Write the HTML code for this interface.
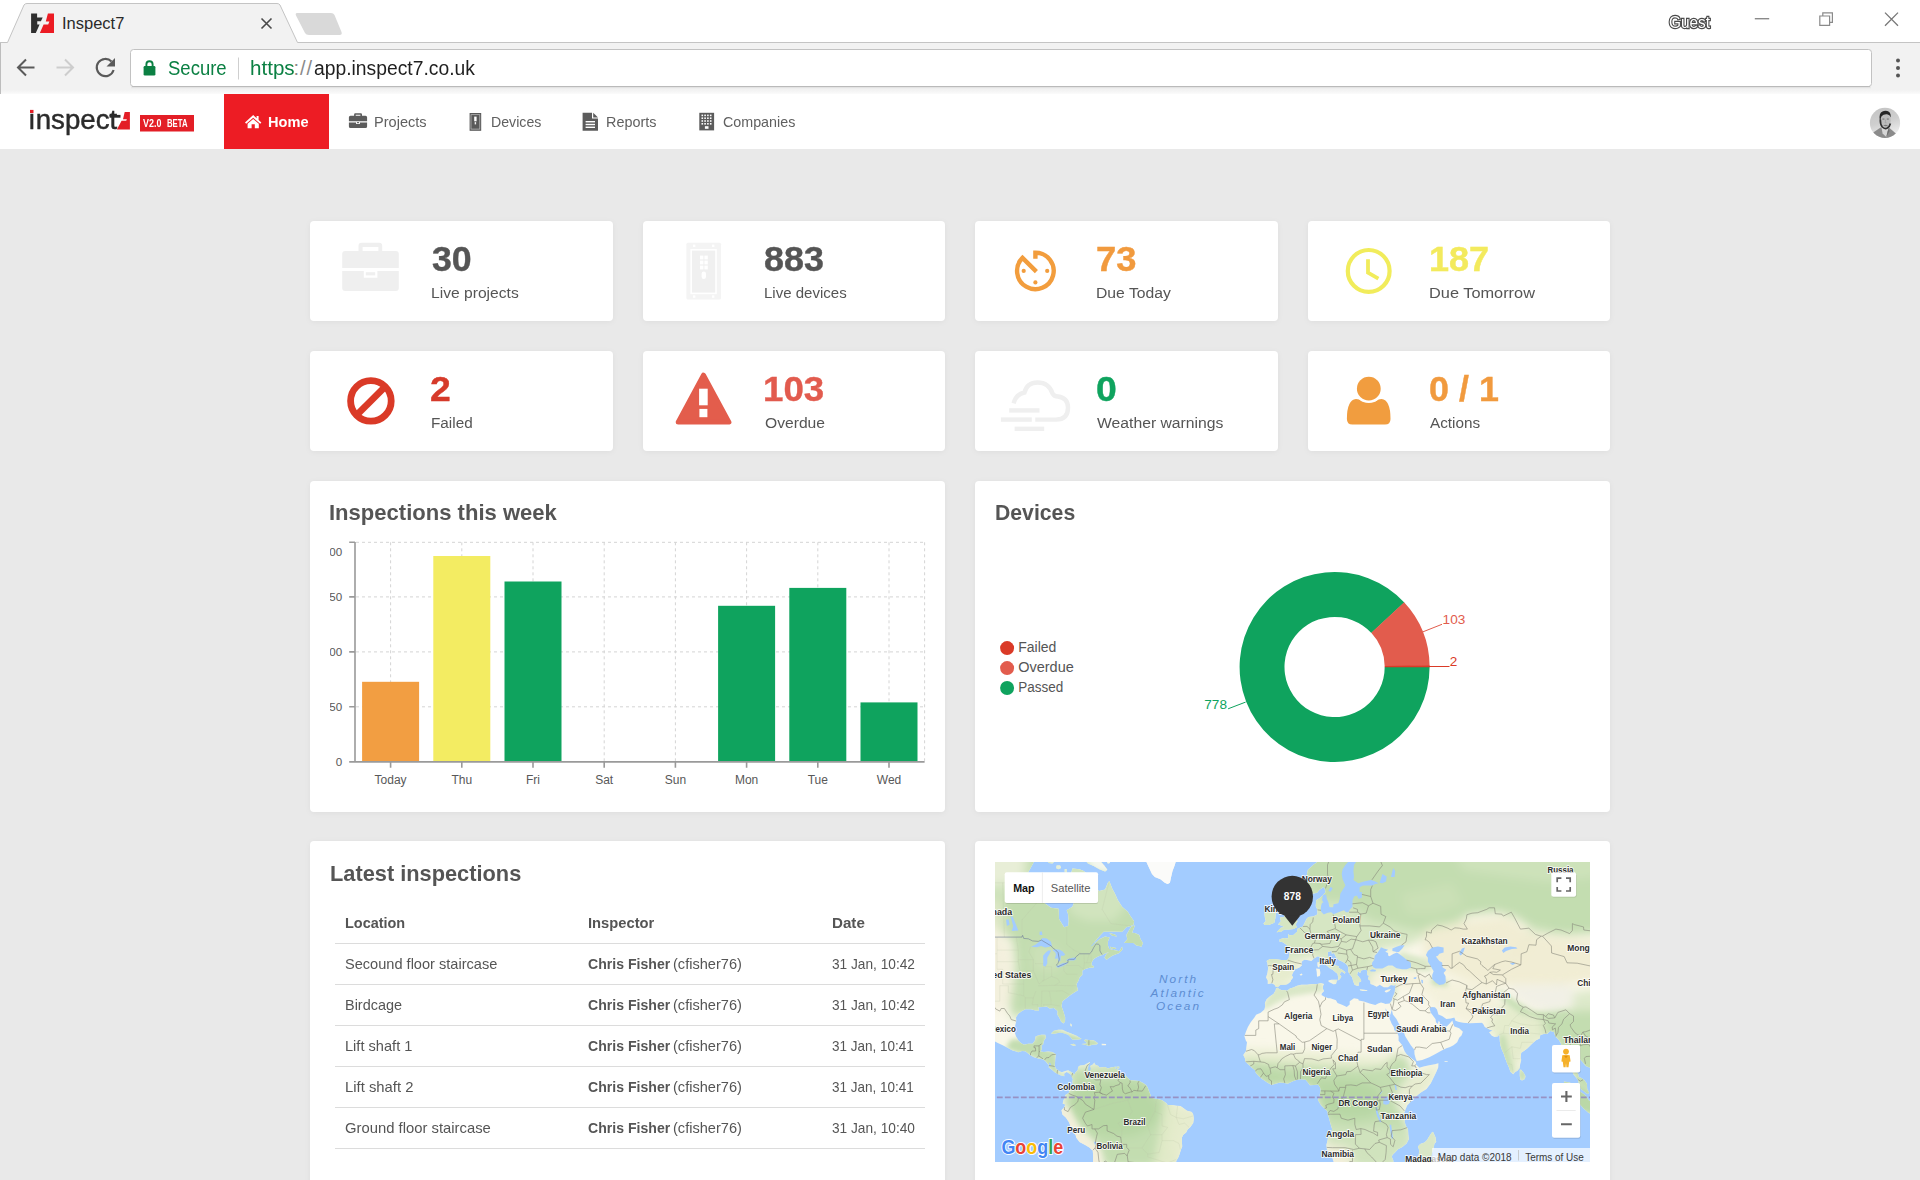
<!DOCTYPE html>
<html>
<head>
<meta charset="utf-8">
<title>Inspect7</title>
<style>
*{box-sizing:border-box;margin:0;padding:0}
html,body{width:1920px;height:1180px;overflow:hidden;background:#e9e9e9;font-family:"Liberation Sans",sans-serif;color:#555}
.abs{position:absolute}
.t{position:absolute;white-space:nowrap;line-height:1;transform-origin:0 0}
#chrome{position:absolute;left:0;top:0;width:1920px;height:94px;background:#fff}
#nav{position:absolute;left:0;top:94px;width:1920px;height:55px;background:#fff}
#home{position:absolute;left:224px;top:0;width:105px;height:55px;background:#ed1c24}
.card{position:absolute;width:302.5px;height:100px;background:#fff;border-radius:4px;box-shadow:0 1px 6px rgba(0,0,0,.05)}
.panel{position:absolute;width:635px;background:#fff;border-radius:4px;box-shadow:0 1px 6px rgba(0,0,0,.05)}
.num{position:absolute;left:121px;top:19.6px;font-weight:bold;font-size:35px;-webkit-text-stroke:.4px;transform:scaleX(.97);line-height:1;white-space:nowrap;transform-origin:0 0}
.lbl{position:absolute;left:121px;top:64px;font-size:15.4px;line-height:1;white-space:nowrap;color:#555;transform-origin:0 0}
.h2{position:absolute;left:20px;top:21px;font-weight:bold;font-size:22px;line-height:1;color:#555;white-space:nowrap;transform-origin:0 0}
.navt{position:absolute;top:21px;font-size:14.5px;line-height:1;color:#606060;white-space:nowrap;transform-origin:0 0}
</style>
</head>
<body>
<!-- BROWSER CHROME -->
<div id="chrome">
<svg class="abs" style="left:0;top:0" width="1920" height="94" viewBox="0 0 1920 94">
  <rect x="0" y="42" width="1920" height="52" fill="#f2f2f2"/>
  <path d="M0 42.5 L7.5 42.5 L24 5 Q25 3.5 27 3.5 L277 3.5 Q279 3.5 280 5 L297.5 42.5 L1920 42.5" fill="#f2f2f2" stroke="none"/>
  <path d="M0 42.5 L7.5 42.5 L24 5 Q25 3.5 27 3.5 L277 3.5 Q279 3.5 280 5 L297.5 42.5 L1920 42.5" fill="none" stroke="#c4c4c4" stroke-width="1"/>
  <rect x="0" y="43" width="1" height="51" fill="#bdbdbd"/>
  <!-- new tab button -->
  <path d="M297 13 L331 13 Q333.5 13 334.5 15 L341.5 32 Q342.5 35 339.5 35 L309 35 Q306 35 305 33 L296 15.5 Q295 13 297 13Z" fill="#d9d9d9"/>
  <!-- url box -->
  <rect x="130.5" y="49.5" width="1741" height="37" rx="3" fill="#fff" stroke="#c2c2c2"/>
  <rect x="132" y="86.2" width="1738" height="1.1" fill="#b9b9b9"/><rect x="131" y="87.3" width="1740" height="1" fill="#e4e4e4"/><defs><linearGradient id="tbg" x1="0" y1="0" x2="0" y2="1"><stop offset="0" stop-color="#f2f2f2"/><stop offset="1" stop-color="#fbfbfb"/></linearGradient></defs><rect x="1" y="90" width="1919" height="4" fill="url(#tbg)"/>
  <!-- favicon -->
  <path d="M31.1 13.6 L37.1 13.6 L37.1 17.5 L42.7 17.5 L40.9 21.3 L37.25 21.3 L37.25 24.4 L39.6 24.4 L35.8 32.9 L31.1 32.9Z" fill="#2f2f2f"/>
  <path d="M47.9 13.6 L54 13.6 L54 32.9 L39.85 32.9 L43.6 24.5 L48.2 24.5 L49.4 21.4 L45.8 21.4Z" fill="#ec1c24"/>
  <!-- tab close -->
  <path d="M261.5 18.5 L271.5 28.5 M271.5 18.5 L261.5 28.5" stroke="#4a4a4a" stroke-width="1.6" fill="none"/>
  <!-- back -->
  <path d="M34.5 67.5 L18.5 67.5 M26 59.5 L18 67.5 L26 75.5" stroke="#5a5a5a" stroke-width="2" fill="none"/>
  <!-- forward -->
  <path d="M56.5 67.5 L72.5 67.5 M65 59.5 L73 67.5 L65 75.5" stroke="#cdcdcd" stroke-width="2" fill="none"/>
  <!-- reload -->
  <path d="M111.5 61.5 A8.6 8.6 0 1 0 113.6 70" stroke="#5a5a5a" stroke-width="2.1" fill="none"/>
  <path d="M115 58 L115 66.5 L106.5 66.5Z" fill="#5a5a5a"/>
  <!-- lock -->
  <path d="M146.4 66 L146.4 64.3 A3.1 3.1 0 0 1 152.6 64.3 L152.6 66" stroke="#0b8043" stroke-width="1.9" fill="none"/>
  <rect x="143.6" y="66" width="11.8" height="9.6" rx="1.3" fill="#0b8043"/>
  <rect x="238" y="57.5" width="1" height="22" fill="#cfcfcf"/>
  <!-- menu dots -->
  <circle cx="1898" cy="60.5" r="2" fill="#555"/><circle cx="1898" cy="68" r="2" fill="#555"/><circle cx="1898" cy="75.5" r="2" fill="#555"/>
  <!-- window controls -->
  <rect x="1754.8" y="18" width="14.4" height="1.4" fill="#8a8a8a"/>
  <path d="M1819.8 16 L1819.8 25.3 L1829.6 25.3 L1829.6 16Z M1822.8 16 L1822.8 12.8 L1832.4 12.8 L1832.4 22.3 L1829.6 22.3" stroke="#8a8a8a" stroke-width="1.2" fill="none"/>
  <path d="M1885 12.6 L1898 25.8 M1898 12.6 L1885 25.8" stroke="#777" stroke-width="1.3" fill="none"/>
</svg>
<div class="t" id="tabtitle" style="left:62px;top:15px;font-size:16.5px;color:#2a2a2a">Inspect7</div>
<div class="t" id="secure" style="left:167.5px;top:58.2px;font-size:20px;color:#0b8043;transform:scaleX(.925)">Secure</div>
<div class="t" id="url1" style="left:249.5px;top:58.2px;font-size:20px;color:#0b8043;transform:scaleX(1.03)">https</div>
<div class="t" id="url2" style="left:293.5px;top:58.2px;font-size:20px;color:#8a8a8a;letter-spacing:1px">://</div>
<div class="t" id="url3" style="left:314px;top:58.2px;font-size:20px;color:#1f1f1f;transform:scaleX(.965)">app.inspect7.co.uk</div>
<div class="t" id="guest" style="left:1669.4px;top:13.6px;font-size:16.3px;color:#fff;-webkit-text-stroke:2.4px #4a4a4a;paint-order:stroke fill;transform:scaleX(.945)">Guest</div>
</div>

<!-- APP NAV -->
<div id="nav">
  <div id="home"></div>
  <!-- logo -->
  <div class="t" id="logo" style="left:28px;top:12.5px;font-size:27px;color:#2b2b2b;-webkit-text-stroke:.45px #2b2b2b;transform:scaleX(1.025)">&#305;nspect</div>
  <svg class="abs" style="left:0;top:0" width="1920" height="55" viewBox="0 94 1920 55">
    <rect x="30" y="109.9" width="3.5" height="3.1" fill="#e31e26"/>
    <rect x="109.5" y="114.9" width="11" height="2.8" fill="#2b2b2b"/>
    <!-- red 7 box -->
    <path d="M124.7 112 L129.9 112 L129.9 129.5 L116.9 129.5 L121.6 120.8 L126.2 120.8 L126.9 119.3 L123 119.3Z" fill="#e31e26"/>
    <!-- badge -->
    <rect x="140" y="115" width="54" height="16.5" fill="#e31e26"/>
    <!-- home icon -->
    <g transform="translate(245,114.5)" fill="#fff">
      <path d="M8.2 0.6 L0 8 L1.2 9.3 L8.2 3.2 L15.2 9.3 L16.4 8 L13.6 5.4 L13.6 1.6 L11.6 1.6 L11.6 3.7Z"/>
      <path d="M8.2 4.5 L2.6 9.3 L2.6 13.8 L6.6 13.8 L6.6 9.8 L9.8 9.8 L9.8 13.8 L13.8 13.8 L13.8 9.3Z"/>
    </g>
    <!-- projects icon (briefcase) -->
    <g transform="translate(348.9,112.8)" fill="#5c5c5c">
      <path d="M5.2 2.9 L5.2 1.6 Q5.2 .4 6.4 .4 L11.9 .4 Q13.1 .4 13.1 1.6 L13.1 2.9 L16.6 2.9 Q18.2 2.9 18.2 4.5 L18.2 8.4 L0 8.4 L0 4.5 Q0 2.9 1.6 2.9Z M6.8 2.9 L11.5 2.9 L11.5 1.9 L6.8 1.9Z"/>
      <path d="M0 9.7 L7.2 9.7 L7.2 11.2 L11 11.2 L11 9.7 L18.2 9.7 L18.2 13.7 Q18.2 15.3 16.6 15.3 L1.6 15.3 Q0 15.3 0 13.7Z"/>
      <rect x="8.1" y="9.3" width="2" height="1.1"/>
    </g>
    <!-- devices icon -->
    <g transform="translate(469.6,113)">
      <rect x="0" y="0" width="11.6" height="17.8" fill="#595959"/>
      <rect x="1.4" y="1.7" width="8.8" height="14.4" fill="none" stroke="#c4c4c4" stroke-width=".7"/>
      <rect x="4.6" y="3.6" width="2.4" height="4.7" fill="#fff"/>
      <rect x="5.1" y="9.1" width="1.4" height="2.3" fill="#f0f0f0"/>
    </g>
    <!-- reports icon -->
    <g transform="translate(582.6,112.8)">
      <path d="M0 0 L9.4 0 L9.4 5.8 L15.4 5.8 L15.4 18 L0 18Z" fill="#5c5c5c"/>
      <path d="M10.6 0 L15.4 4.7 L10.6 4.7Z" fill="#5c5c5c"/>
      <rect x="3" y="8.2" width="9.4" height="1.4" fill="#fff"/><rect x="3" y="11" width="9.4" height="1.4" fill="#fff"/><rect x="3" y="13.8" width="9.4" height="1.4" fill="#fff"/>
    </g>
    <!-- companies icon -->
    <g transform="translate(699.3,112.8)">
      <rect x="0" y="0" width="14.8" height="17.6" fill="#5c5c5c"/>
      <g fill="#fff">
      <rect x="2.2" y="1.8" width="1.6" height="1.6"/><rect x="5" y="1.8" width="1.6" height="1.6"/><rect x="7.8" y="1.8" width="1.6" height="1.6"/><rect x="10.6" y="1.8" width="1.6" height="1.6"/>
      <rect x="2.2" y="4.6" width="1.6" height="1.6"/><rect x="5" y="4.6" width="1.6" height="1.6"/><rect x="7.8" y="4.6" width="1.6" height="1.6"/><rect x="10.6" y="4.6" width="1.6" height="1.6"/>
      <rect x="2.2" y="7.4" width="1.6" height="1.6"/><rect x="5" y="7.4" width="1.6" height="1.6"/><rect x="7.8" y="7.4" width="1.6" height="1.6"/><rect x="10.6" y="7.4" width="1.6" height="1.6"/>
      <rect x="2.2" y="10.2" width="1.6" height="1.6"/><rect x="5" y="10.2" width="1.6" height="1.6"/><rect x="7.8" y="10.2" width="1.6" height="1.6"/><rect x="10.6" y="10.2" width="1.6" height="1.6"/>
      <rect x="5.6" y="13.4" width="3.6" height="2.6"/>
      </g>
    </g>
    <!-- avatar -->
    <defs><clipPath id="avc"><circle cx="1885" cy="122.9" r="15.1"/></clipPath>
    <linearGradient id="avg" x1="0" y1="0" x2="0.3" y2="1"><stop offset="0" stop-color="#c2c2c2"/><stop offset=".55" stop-color="#cfcfcf"/><stop offset="1" stop-color="#efefef"/></linearGradient></defs>
    <g clip-path="url(#avc)">
      <rect x="1869" y="107" width="32" height="32" fill="url(#avg)"/>
      <path d="M1872.5 133 L1880.6 127.4 L1889.2 127.8 L1895.6 133.2 L1897 140 L1872 140Z" fill="#8b8b8b"/>
      <path d="M1881.3 126.5 L1888.6 127 L1887.6 131.5 L1886.3 137 L1882.6 133.5Z" fill="#d6d6d6"/>
      <path d="M1886.3 137 L1887.6 131.5 L1888.8 128.5 L1889.6 131 Z" fill="#6e6e6e"/>
      <ellipse cx="1885.4" cy="120.6" rx="5.3" ry="7.2" fill="#bcbcbc"/>
      <path d="M1879.7 119.5 Q1878.8 113 1882.5 111.4 Q1886 109.8 1889.3 112 Q1891.3 114 1890.9 117.5 Q1889.8 114.6 1887 114.3 Q1883.5 114 1881.6 116.2 Q1880.6 117.5 1880.6 120.5Z" fill="#262626"/>
      <path d="M1880.3 119.5 Q1880.2 124.5 1882.3 127 Q1884.8 129.4 1887.3 128 Q1889.8 126.5 1890.4 123.5" fill="none" stroke="#303030" stroke-width="1.7"/>
      <path d="M1883.2 125.2 Q1885.5 124.2 1888 125.2 Q1886 127.2 1883.2 125.2Z" fill="#777"/>
      <rect x="1882.4" y="118.6" width="2" height=".9" fill="#666"/><rect x="1886.8" y="118.6" width="2" height=".9" fill="#666"/>
      <path d="M1885.6 119.5 L1885.2 122.8 L1886.4 122.8" stroke="#999" stroke-width=".6" fill="none"/>
    </g>
  </svg>
  <div class="t" id="badge1" style="left:142.6px;top:24px;font-size:10.5px;font-weight:bold;color:#fff;transform:scaleX(.85)">V2.0</div>
  <div class="t" id="badge2" style="left:166.6px;top:24px;font-size:10.5px;font-weight:bold;color:#fff;transform:scaleX(.74)">BETA</div>
  <div class="navt" id="nhome" style="left:268.2px;color:#fff;font-weight:bold;font-size:15.3px;top:20px;transform:scaleX(0.953)">Home</div>
  <div class="navt" id="nproj" style="left:373.60px;transform:scaleX(1.0042)">Projects</div>
  <div class="navt" id="ndev" style="left:491.40px;transform:scaleX(0.9759)">Devices</div>
  <div class="navt" id="nrep" style="left:605.80px;transform:scaleX(0.9918)">Reports</div>
  <div class="navt" id="ncomp" style="left:723.40px;transform:scaleX(0.9856)">Companies</div>
</div>

<!-- CARDS -->
<div class="card" style="left:310px;top:221px"><div class="num" id="num1" style="left:121.90px;transform:scaleX(1.0194)">30</div><div class="lbl" id="lbl1" style="left:120.90px;transform:scaleX(1.0152)">Live projects</div></div>
<div class="card" style="left:642.5px;top:221px"><div class="num" id="num2" style="left:121.20px;transform:scaleX(1.0257)">883</div><div class="lbl" id="lbl2" style="left:121.00px;transform:scaleX(0.9766)">Live devices</div></div>
<div class="card" style="left:975px;top:221px"><div class="num" id="num3" style="left:120.60px;color:#f19a3e;transform:scaleX(1.0393)">73</div><div class="lbl" id="lbl3" style="left:120.50px;transform:scaleX(1.0210)">Due Today</div></div>
<div class="card" style="left:1307.5px;top:221px"><div class="num" id="num4" style="left:121.10px;color:#f3ea5d;transform:scaleX(1.0305)">187</div><div class="lbl" id="lbl4" style="left:121.20px;transform:scaleX(1.0616)">Due Tomorrow</div></div>
<div class="card" style="left:310px;top:351px"><div class="num" id="num5" style="left:120.10px;color:#d63a2a;transform:scaleX(1.0677)">2</div><div class="lbl" id="lbl5" style="left:120.90px;transform:scaleX(0.9942)">Failed</div></div>
<div class="card" style="left:642.5px;top:351px"><div class="num" id="num6" style="left:120.60px;color:#e25b4e;transform:scaleX(1.0469)">103</div><div class="lbl" id="lbl6" style="left:122.60px;transform:scaleX(1.0164)">Overdue</div></div>
<div class="card" style="left:975px;top:351px"><div class="num" id="num7" style="left:120.60px;color:#0fa35e;transform:scaleX(1.0665)">0</div><div class="lbl" id="lbl7" style="left:121.50px;transform:scaleX(1.0215)">Weather warnings</div></div>
<div class="card" style="left:1307.5px;top:351px"><div class="num" id="num8" style="left:121.20px;color:#f19a3e;transform:scaleX(1.0258)">0 / 1</div><div class="lbl" id="lbl8" style="left:122.20px;transform:scaleX(0.9938)">Actions</div></div>


<!-- CARD ICONS -->
<svg class="abs" style="left:0;top:200px" width="1920" height="270" viewBox="0 200 1920 270">
  <!-- briefcase -->
  <g fill="#efefef">
    <path d="M358.5 252 L358.5 245.7 Q358.5 242.7 361.5 242.7 L379.2 242.7 Q382.2 242.7 382.2 245.7 L382.2 252 L378.4 252 L378.4 246.9 L362.6 246.9 L362.6 252Z"/>
    <path d="M345.2 251 L395.8 251 Q398.8 251 398.8 254 L398.8 267.9 L342.2 267.9 L342.2 254 Q342.2 251 345.2 251Z"/>
    <path d="M342.2 270.9 L363.8 270.9 L363.8 277.7 L377.4 277.7 L377.4 270.9 L398.8 270.9 L398.8 288 Q398.8 291 395.8 291 L345.2 291 Q342.2 291 342.2 288Z"/>
    <rect x="365.8" y="272.2" width="9.4" height="3.2"/>
  </g>
  <!-- device -->
  <g>
    <rect x="686.4" y="242.7" width="34.6" height="56.9" rx="1.5" fill="#f4f4f4"/>
    <rect x="690.4" y="249" width="26.4" height="45.2" fill="#fff"/>
    <rect x="692" y="250.6" width="23.2" height="42" fill="#f0f0f0"/>
    <g fill="#fff">
      <rect x="700" y="255.6" width="3.4" height="3.8"/><rect x="704.4" y="255.6" width="3.4" height="3.8"/>
      <rect x="700" y="260.6" width="3.4" height="3.8"/><rect x="704.4" y="260.6" width="3.4" height="3.8"/>
      <rect x="700" y="265.6" width="3.4" height="3.8"/><rect x="704.4" y="265.6" width="3.4" height="3.8"/>
      <rect x="701.6" y="271.6" width="4.4" height="7.4" rx="2.2"/>
      <rect x="693" y="244.6" width="2.4" height="2.4"/><rect x="712" y="244.6" width="2.4" height="2.4"/>
      <rect x="693" y="295.4" width="2.4" height="2.4"/><rect x="712" y="295.4" width="2.4" height="2.4"/>
    </g>
  </g>
  <!-- due today dial -->
  <g fill="none" stroke="#f29d3d" stroke-width="4.4">
    <path d="M1035.4 258.7 L1035.4 252.6 A18.3 18.3 0 1 1 1022.5 257.9 L1036.4 271.6" stroke-linejoin="miter" stroke-miterlimit="6"/>
  </g>
  <g fill="#f29d3d"><circle cx="1023.7" cy="270.9" r="2.1"/><circle cx="1047.2" cy="270.9" r="2.1"/><circle cx="1035.4" cy="282.4" r="2.1"/></g>
  <!-- clock -->
  <g fill="none" stroke="#f1ec5b">
    <circle cx="1368.7" cy="270.9" r="20.9" stroke-width="4.2"/>
    <path d="M1368 259.3 L1368 272.6 L1378.4 278.7" stroke-width="3.8" stroke-linejoin="miter"/>
  </g>
  <!-- ban -->
  <g fill="none" stroke="#da3a27" stroke-width="6.8">
    <circle cx="370.9" cy="400.9" r="20.3"/>
    <path d="M356.6 415.2 L385.2 386.6"/>
  </g>
  <!-- warning -->
  <path d="M703.5 375.2 L728.9 422.1 L678.2 422.1Z" fill="#e35d4c" stroke="#e35d4c" stroke-width="5" stroke-linejoin="round"/>
  <rect x="699.1" y="388.7" width="8.6" height="16.6" fill="#fff"/>
  <rect x="699.4" y="408.9" width="8" height="8.3" fill="#fff"/>
  <!-- weather -->
  <g fill="none" stroke="#efefef" stroke-width="4.4">
    <path d="M1013.6 403.4 Q1016 394 1024.5 392.5 Q1027 382.5 1037.5 382.5 Q1049 382.5 1052.5 393.5 Q1054 396.5 1058 396.5 Q1068 398 1068 407.5 Q1068 419.6 1056 419.6 L1035.3 419.6"/>
    <path d="M1009.2 410.4 L1039.5 410.4"/>
    <path d="M1000.9 419.6 L1031.8 419.6"/>
    <path d="M1014.6 428.8 L1044.2 428.8"/>
  </g>
  <!-- person -->
  <path d="M1352.4 424.6 Q1346.9 424.6 1346.9 419 Q1346.9 400 1356 399.1 Q1359 399.1 1362 401.5 L1375.6 401.5 Q1378.6 399.1 1381.5 399.1 Q1390.5 400 1390.5 419 Q1390.5 424.6 1385 424.6Z" fill="#f19d3f"/>
  <circle cx="1368.8" cy="388.7" r="14.3" fill="#fff"/>
  <circle cx="1368.8" cy="388.7" r="11.9" fill="#f19d3f"/>
</svg>

<!-- PANELS -->
<div class="panel" id="p1" style="left:310px;top:481px;height:331px"><div class="h2" id="h21" style="left:19.25px;transform:scaleX(1.0018)">Inspections this week</div>
<svg class="abs" style="left:0;top:0" width="635" height="330" viewBox="310 481 635 330" font-family="Liberation Sans, sans-serif">
<defs><clipPath id="ycl"><rect x="330" y="535" width="30" height="240"/></clipPath></defs>
<path d="M356.0 542.3 L924.6 542.3 M356.0 596.9 L924.6 596.9 M356.0 651.9 L924.6 651.9 M356.0 706.8 L924.6 706.8 M390.6 542.3 L390.6 760.9 M461.8 542.3 L461.8 760.9 M533.0 542.3 L533.0 760.9 M604.2 542.3 L604.2 760.9 M675.4 542.3 L675.4 760.9 M746.6 542.3 L746.6 760.9 M817.8 542.3 L817.8 760.9 M889.0 542.3 L889.0 760.9 M924.6 542.3 L924.6 760.9" stroke="#d4d4d4" stroke-width="1" stroke-dasharray="3 3" fill="none"/>
<rect x="362.1" y="681.8" width="57" height="79.5" fill="#f29e42"/>
<rect x="433.3" y="556" width="57" height="205.3" fill="#f3ec62"/>
<rect x="504.5" y="581.5" width="57" height="179.8" fill="#0fa35e"/>
<rect x="718.1" y="605.8" width="57" height="155.5" fill="#0fa35e"/>
<rect x="789.3" y="587.9" width="57" height="173.4" fill="#0fa35e"/>
<rect x="860.5" y="702.4" width="57" height="58.9" fill="#0fa35e"/>
<path d="M355.0 541.9 L355.0 762.7 M349.2 761.9 L924.6 761.9 M349.2 542.3 L355.0 542.3 M349.2 596.9 L355.0 596.9 M349.2 651.9 L355.0 651.9 M349.2 706.8 L355.0 706.8 M390.6 761.9 L390.6 767.7 M461.8 761.9 L461.8 767.7 M533.0 761.9 L533.0 767.7 M604.2 761.9 L604.2 767.7 M675.4 761.9 L675.4 767.7 M746.6 761.9 L746.6 767.7 M817.8 761.9 L817.8 767.7 M889.0 761.9 L889.0 767.7" stroke="#9a9a9a" stroke-width="1.6" fill="none"/>
<g clip-path="url(#ycl)" font-size="11.6" fill="#585858" text-anchor="end">
<text x="342.2" y="766">0</text>
<text x="342.2" y="710.9">50</text>
<text x="342.2" y="656">100</text>
<text x="342.2" y="601">150</text>
<text x="342.2" y="555.9">200</text>
</g>
<g font-size="12" fill="#585858" text-anchor="middle">
<text x="390.6" y="783.8">Today</text>
<text x="461.8" y="783.8">Thu</text>
<text x="533.0" y="783.8">Fri</text>
<text x="604.2" y="783.8">Sat</text>
<text x="675.4" y="783.8">Sun</text>
<text x="746.6" y="783.8">Mon</text>
<text x="817.8" y="783.8">Tue</text>
<text x="889.0" y="783.8">Wed</text>
</g></svg>
</div>
<div class="panel" id="p2" style="left:975px;top:481px;height:331px"><div class="h2" id="h22" style="left:19.75px;transform:scaleX(0.9643)">Devices</div>
<svg class="abs" style="left:0;top:0" width="635" height="330" viewBox="975 481 635 330" font-family="Liberation Sans, sans-serif">
<path d="M1404.29 602.44 A95.0 95.0 0 1 0 1429.60 667.00 L1384.70 667.00 A50.1 50.1 0 1 1 1371.35 632.95Z" fill="#0fa35e"/>
<path d="M1429.59 665.65 A95.0 95.0 0 0 0 1404.13 602.26 L1371.27 632.86 A50.1 50.1 0 0 1 1384.69 666.29Z" fill="#e25c4d"/>
<path d="M1429.60 667.25 A95.0 95.0 0 0 0 1429.59 665.32 L1384.69 666.11 A50.1 50.1 0 0 1 1384.70 667.13Z" fill="#da3a27"/>
<path d="M1423 631.8 L1442 624.3" stroke="#e25c4d" stroke-width="1" fill="none"/>
<path d="M1385 666.5 L1449.5 666.5" stroke="#da3a27" stroke-width="1.2" fill="none"/>
<path d="M1228.1 708.8 L1245.6 702.1" stroke="#0fa35e" stroke-width="1" fill="none"/>
<text x="1442.6" y="624" font-size="13.6" fill="#e25c4d">103</text>
<text x="1449.7" y="665.8" font-size="13.6" fill="#da3a27">2</text>
<text x="1204.3" y="708.8" font-size="13.6" fill="#0fa35e">778</text>
<circle cx="1007.1" cy="648.1" r="7" fill="#da3a27"/><circle cx="1007.1" cy="668.1" r="7" fill="#e25c4d"/><circle cx="1007.1" cy="688" r="7" fill="#0fa35e"/>
<g font-size="14" fill="#555"><text x="1018.2" y="651.8">Failed</text><text x="1018.2" y="671.8" textLength="55.6" lengthAdjust="spacingAndGlyphs">Overdue</text><text x="1018.2" y="691.7" textLength="45" lengthAdjust="spacingAndGlyphs">Passed</text></g>
</svg>
</div>
<div class="panel" id="p3" style="left:310px;top:841px;height:361px"><div class="abs" style="left:0;top:1px;width:635px;height:360px"><div class="h2" id="h23" style="left:20.00px;transform:scaleX(0.9903)">Latest inspections</div>
<style>.tc{position:absolute;white-space:nowrap;line-height:1;font-size:14.6px;color:#555;transform-origin:0 0}.tl{position:absolute;left:25px;width:590px;height:1px;background:#dcdcdc}</style>
<div class="tc" id="th1" style="left:35px;top:74.4px;font-weight:bold;transform:scaleX(0.9899)">Location</div>
<div class="tc" id="th2" style="left:277.8px;top:74.4px;font-weight:bold;transform:scaleX(1.0093)">Inspector</div>
<div class="tc" id="th3" style="left:522.2px;top:74.4px;font-weight:bold;transform:scaleX(1.0366)">Date</div>
<div class="tl" style="top:100.9px"></div>
<div class="tl" style="top:141.9px"></div>
<div class="tl" style="top:182.8px"></div>
<div class="tl" style="top:223.8px"></div>
<div class="tl" style="top:264.7px"></div>
<div class="tl" style="top:305.7px"></div>
<div class="tc" id="r0a" style="left:35px;top:115.1px;transform:scaleX(0.9986)">Secound floor staircase</div>
<div class="tc" id="r0b" style="left:277.8px;top:115.1px;font-weight:bold;transform:scaleX(0.9653)">Chris Fisher</div>
<div class="tc" id="r0c" style="left:363.3px;top:115.1px;transform:scaleX(0.9995)">(cfisher76)</div>
<div class="tc" id="r0d" style="left:522.2px;top:115.1px;transform:scaleX(0.9372)">31 Jan, 10:42</div>
<div class="tc" id="r1a" style="left:35px;top:156.1px;transform:scaleX(0.9894)">Birdcage</div>
<div class="tc" id="r1b" style="left:277.8px;top:156.1px;font-weight:bold;transform:scaleX(0.9653)">Chris Fisher</div>
<div class="tc" id="r1c" style="left:363.3px;top:156.1px;transform:scaleX(0.9995)">(cfisher76)</div>
<div class="tc" id="r1d" style="left:522.2px;top:156.1px;transform:scaleX(0.9372)">31 Jan, 10:42</div>
<div class="tc" id="r2a" style="left:35px;top:197.1px;transform:scaleX(1.0008)">Lift shaft 1</div>
<div class="tc" id="r2b" style="left:277.8px;top:197.1px;font-weight:bold;transform:scaleX(0.9653)">Chris Fisher</div>
<div class="tc" id="r2c" style="left:363.3px;top:197.1px;transform:scaleX(0.9995)">(cfisher76)</div>
<div class="tc" id="r2d" style="left:522.2px;top:197.1px;transform:scaleX(0.9248)">31 Jan, 10:41</div>
<div class="tc" id="r3a" style="left:35px;top:238.1px;transform:scaleX(1.0157)">Lift shaft 2</div>
<div class="tc" id="r3b" style="left:277.8px;top:238.1px;font-weight:bold;transform:scaleX(0.9653)">Chris Fisher</div>
<div class="tc" id="r3c" style="left:363.3px;top:238.1px;transform:scaleX(0.9995)">(cfisher76)</div>
<div class="tc" id="r3d" style="left:522.2px;top:238.1px;transform:scaleX(0.9248)">31 Jan, 10:41</div>
<div class="tc" id="r4a" style="left:35px;top:279.1px;transform:scaleX(1.0155)">Ground floor staircase</div>
<div class="tc" id="r4b" style="left:277.8px;top:279.1px;font-weight:bold;transform:scaleX(0.9653)">Chris Fisher</div>
<div class="tc" id="r4c" style="left:363.3px;top:279.1px;transform:scaleX(0.9995)">(cfisher76)</div>
<div class="tc" id="r4d" style="left:522.2px;top:279.1px;transform:scaleX(0.9372)">31 Jan, 10:40</div>
</div></div>
<div class="panel" id="p4" style="left:975px;top:841px;height:361px"><div class="abs" style="left:0;top:1px;width:635px;height:360px">
<svg class="abs" style="left:20px;top:20px" width="595" height="300" viewBox="995 862 595 300" font-family="Liberation Sans, sans-serif">
<rect x="995" y="862" width="595" height="300" fill="#a3ccff"/>
<defs><clipPath id="landclip"><path d="M994.1 858.5L1034.0 858.5L1034.0 861.7L1029.7 869.8L1025.4 877.0L1023.1 882.8L1024.9 889.5L1029.7 898.1L1036.8 899.1L1042.5 901.7L1051.0 907.8L1058.7 908.8L1059.0 919.0L1062.4 924.6L1064.1 927.3L1068.1 925.9L1068.7 921.3L1068.1 914.2L1066.7 910.3L1072.4 906.8L1074.6 900.7L1073.8 894.9L1069.5 889.5L1071.5 882.8L1070.9 874.0L1072.4 868.6L1079.5 869.2L1083.7 871.0L1089.4 875.8L1093.7 877.0L1094.8 882.8L1095.1 888.4L1099.4 891.1L1105.1 889.5L1107.9 882.8L1109.3 881.1L1112.2 888.4L1115.0 893.8L1117.9 900.2L1122.1 906.8L1127.8 911.8L1130.7 916.6L1134.1 921.3L1133.5 925.0L1126.4 927.3L1122.1 931.8L1113.6 931.4L1103.6 931.8L1099.4 936.2L1094.3 942.2L1095.1 943.1L1099.4 939.2L1105.1 936.6L1109.6 937.5L1107.9 941.4L1107.9 945.6L1109.3 948.9L1112.2 949.7L1116.4 950.5L1119.3 951.3L1122.1 946.4L1122.4 949.7L1119.3 953.0L1112.2 955.8L1106.5 959.7L1104.5 957.7L1106.5 953.8L1109.3 951.7L1105.1 953.4L1102.2 955.0L1098.0 956.6L1093.7 958.9L1091.7 962.4L1091.7 965.5L1093.7 965.9L1093.7 967.4L1089.4 967.8L1085.2 968.9L1082.3 970.8L1082.3 974.9L1079.5 977.5L1078.6 980.4L1076.6 984.0L1077.2 987.5L1078.0 990.3L1074.3 992.4L1070.9 994.8L1066.7 997.9L1062.4 1001.2L1061.5 1006.2L1063.8 1012.8L1065.2 1017.6L1065.0 1021.7L1063.3 1023.6L1061.0 1021.4L1059.6 1018.2L1057.3 1014.4L1057.6 1011.1L1053.9 1007.9L1049.6 1008.5L1046.8 1006.6L1042.5 1006.9L1038.2 1007.2L1039.1 1010.5L1035.4 1010.5L1031.1 1009.2L1025.4 1009.2L1022.0 1011.1L1018.3 1013.7L1016.0 1017.6L1016.3 1020.8L1014.9 1027.0L1014.6 1031.7L1016.0 1036.3L1018.6 1040.8L1021.2 1043.2L1024.0 1044.7L1028.3 1043.8L1032.5 1043.8L1034.8 1040.8L1035.7 1036.3L1041.1 1034.8L1045.3 1034.8L1045.9 1037.8L1043.9 1040.8L1043.1 1044.4L1041.6 1045.3L1041.6 1049.8L1040.2 1051.6L1043.9 1051.9L1048.2 1051.6L1052.4 1051.9L1055.9 1054.2L1055.3 1058.6L1055.0 1063.0L1054.7 1065.9L1056.1 1068.8L1059.0 1071.1L1061.8 1072.3L1065.2 1071.1L1068.1 1070.3L1070.9 1071.7L1072.6 1072.8L1072.1 1075.7L1069.5 1073.7L1066.7 1072.0L1064.1 1073.7L1064.4 1076.3L1061.0 1075.4L1057.3 1073.7L1055.0 1072.6L1051.6 1069.4L1048.7 1067.4L1049.0 1065.3L1045.3 1061.0L1043.3 1059.5L1038.2 1058.6L1034.0 1057.2L1029.7 1054.8L1025.4 1051.3L1022.0 1051.0L1018.3 1052.2L1012.6 1050.4L1008.4 1048.3L1002.7 1045.3L997.8 1042.9L991.3 1039.9L991.3 858.5ZM1124.1 943.1L1127.3 939.2L1126.4 934.9L1129.5 929.6L1131.2 926.4L1134.9 925.5L1133.5 929.1L1132.1 932.7L1134.9 933.1L1139.2 934.9L1140.6 939.2L1142.9 943.1L1141.5 946.8L1139.2 946.0L1136.4 945.6L1133.5 943.1L1129.2 943.1ZM1110.2 946.8L1113.6 947.6L1116.4 948.1L1115.0 949.3L1110.8 948.5ZM1109.3 933.1L1115.0 934.4L1117.0 936.6L1112.2 935.8ZM1083.7 858.5L1088.0 863.6L1093.7 866.1L1099.4 869.2L1105.1 871.6L1107.3 869.8L1104.2 865.5L1100.8 861.7L1099.4 858.5ZM1105.1 858.5L1107.9 863.6L1109.9 863.0L1110.8 858.5ZM1046.8 858.5L1048.7 863.0L1052.4 863.6L1056.1 859.8L1059.6 858.5ZM1056.7 865.5L1060.1 865.5L1061.0 868.0L1058.1 869.2L1056.1 868.0ZM1064.7 869.2L1066.7 869.2L1066.7 872.8L1064.7 872.2ZM1144.9 858.5L1146.3 861.7L1149.2 868.0L1152.0 874.0L1154.8 877.0L1160.5 879.3L1164.8 882.8L1167.6 883.9L1169.9 882.8L1171.1 877.0L1172.5 871.0L1174.8 864.9L1176.7 858.5ZM1276.6 932.2L1281.4 931.4L1284.3 929.6L1288.5 929.6L1293.4 929.1L1296.8 927.3L1295.6 924.6L1297.6 920.9L1293.7 919.0L1292.8 916.1L1291.9 911.8L1288.5 909.3L1287.1 904.8L1284.3 904.3L1287.1 899.1L1287.7 896.0L1282.8 895.4L1281.4 893.8L1284.0 890.6L1278.6 890.6L1277.2 894.9L1275.7 898.1L1276.9 902.7L1278.0 906.8L1279.1 909.8L1282.8 909.8L1284.3 914.2L1284.3 917.1L1280.0 917.5L1280.9 921.3L1278.0 924.6L1281.4 925.5L1284.3 926.9L1280.9 927.8ZM1264.4 925.0L1268.6 925.0L1274.3 922.7L1275.4 918.0L1275.7 913.2L1277.2 911.3L1275.2 908.3L1271.5 907.8L1268.6 911.3L1264.4 913.2L1264.9 917.5L1265.8 920.9L1263.5 923.2ZM1319.8 858.5L1594.3 858.5L1594.3 1067.7L1590.0 1067.7L1585.8 1065.9L1582.9 1062.4L1579.8 1058.9L1577.2 1059.2L1577.0 1063.0L1575.0 1067.4L1575.3 1071.1L1578.1 1073.7L1578.7 1076.9L1581.5 1078.0L1584.4 1080.3L1586.9 1083.7L1587.2 1088.9L1589.2 1093.1L1587.2 1093.7L1583.8 1091.1L1580.9 1088.9L1579.0 1084.6L1578.1 1080.3L1576.4 1078.0L1573.5 1074.6L1572.4 1071.7L1573.3 1067.4L1573.3 1063.0L1572.1 1057.8L1570.7 1054.2L1570.4 1049.8L1568.1 1048.6L1564.2 1051.9L1561.0 1051.3L1561.6 1046.8L1560.7 1042.9L1558.8 1039.9L1555.3 1036.3L1553.9 1032.0L1550.2 1031.1L1547.4 1033.8L1543.7 1034.1L1540.3 1035.1L1539.7 1038.4L1536.0 1040.2L1532.3 1043.5L1527.5 1048.3L1524.6 1050.4L1521.2 1052.8L1520.6 1057.2L1521.2 1060.1L1520.1 1064.5L1519.8 1067.9L1517.5 1070.8L1515.2 1072.0L1513.2 1074.3L1510.4 1071.7L1509.0 1067.4L1507.0 1063.0L1505.3 1058.6L1503.9 1054.2L1501.9 1049.8L1500.4 1045.3L1499.9 1041.7L1499.6 1036.3L1499.0 1034.1L1498.2 1036.3L1494.8 1036.9L1491.9 1035.7L1489.1 1032.3L1492.8 1030.5L1490.5 1030.1L1487.6 1028.6L1484.8 1027.0L1483.4 1024.2L1482.0 1022.7L1476.3 1023.0L1469.2 1023.3L1463.5 1022.7L1459.2 1022.0L1455.5 1020.8L1454.4 1017.6L1450.7 1018.5L1446.4 1018.9L1442.1 1016.0L1438.4 1014.4L1437.0 1009.5L1435.0 1007.2L1431.6 1006.9L1429.6 1008.5L1430.8 1012.8L1433.6 1016.6L1435.6 1019.2L1435.9 1022.3L1437.9 1023.9L1438.7 1020.8L1439.9 1022.3L1439.3 1025.8L1442.1 1026.4L1446.4 1026.7L1449.2 1023.9L1452.4 1020.5L1453.2 1023.9L1454.4 1026.4L1459.2 1028.3L1462.9 1031.7L1461.5 1035.4L1459.2 1037.8L1457.2 1042.3L1453.5 1045.3L1450.1 1047.1L1446.4 1048.3L1441.3 1050.7L1435.0 1054.2L1429.3 1057.2L1422.2 1060.1L1416.8 1061.0L1415.7 1058.6L1414.5 1054.2L1414.3 1049.8L1410.8 1045.3L1408.0 1040.8L1405.2 1036.3L1403.7 1031.7L1400.9 1027.0L1398.6 1023.3L1396.6 1019.2L1392.9 1014.4L1391.8 1009.5L1390.6 1013.7L1390.1 1015.0L1388.1 1012.8L1385.5 1008.2L1384.7 1003.9L1389.5 1003.6L1391.8 1000.6L1392.6 997.2L1394.6 992.7L1395.2 988.2L1395.8 985.0L1393.8 985.4L1390.9 985.0L1388.1 987.2L1383.8 987.2L1379.8 984.7L1376.7 986.8L1373.3 985.0L1370.5 984.0L1370.2 980.7L1367.9 978.9L1369.0 975.7L1367.0 974.9L1367.3 971.9L1366.8 970.1L1363.9 969.7L1361.1 970.5L1360.2 973.1L1357.9 971.6L1357.1 974.9L1358.8 976.8L1361.1 979.7L1361.1 981.5L1358.8 982.5L1358.8 985.7L1356.8 985.7L1354.5 984.7L1353.1 981.1L1352.5 978.6L1351.7 976.8L1349.7 974.2L1348.0 971.2L1348.3 967.4L1347.4 965.5L1345.4 963.6L1342.6 961.7L1338.3 959.7L1336.0 957.0L1334.0 953.0L1331.8 953.8L1331.5 950.9L1327.8 952.1L1328.1 956.6L1331.2 959.3L1333.2 963.6L1336.0 965.5L1338.9 966.3L1338.3 967.8L1342.6 970.1L1345.4 972.3L1344.9 973.8L1341.7 971.6L1339.7 974.2L1341.4 976.8L1339.7 979.3L1337.5 980.7L1338.3 978.2L1337.5 973.8L1335.5 972.3L1333.5 970.5L1329.8 968.2L1327.5 966.3L1324.1 963.6L1322.4 959.7L1320.7 957.4L1317.8 956.2L1314.1 958.5L1311.3 960.9L1307.0 960.1L1304.2 959.7L1301.6 961.7L1301.9 965.5L1299.1 967.8L1295.1 969.3L1292.8 973.1L1291.9 975.3L1293.1 977.5L1290.8 980.4L1290.5 981.8L1287.7 984.0L1285.7 984.7L1280.3 985.0L1277.7 987.2L1275.7 986.8L1274.6 984.7L1271.8 983.3L1267.8 984.0L1267.8 980.4L1266.1 977.5L1267.5 973.1L1268.1 968.6L1267.5 963.6L1266.6 960.9L1270.0 958.9L1275.7 959.3L1281.4 960.1L1287.1 960.1L1288.8 957.7L1289.4 951.7L1289.4 948.9L1286.5 944.7L1282.8 942.2L1279.4 941.4L1279.7 939.2L1284.3 937.9L1288.2 938.4L1288.0 934.0L1289.4 935.3L1293.4 934.9L1297.1 931.8L1297.6 928.7L1299.9 927.8L1302.8 926.4L1304.7 922.7L1306.5 919.0L1308.4 917.1L1312.7 916.6L1315.6 915.6L1317.5 914.2L1317.3 909.3L1315.8 906.3L1316.1 900.2L1319.8 898.1L1322.7 895.4L1325.5 892.2L1324.7 888.4L1323.2 886.7L1321.8 888.4L1319.8 889.5L1317.0 892.7L1312.7 893.8L1309.0 890.6L1307.6 885.6L1307.0 879.9L1307.0 874.0L1307.9 869.8L1311.3 866.7L1314.1 864.2L1317.0 862.3ZM1519.8 1069.7L1521.2 1069.7L1523.8 1073.1L1525.5 1076.0L1524.9 1078.9L1522.1 1080.6L1520.4 1079.7L1519.8 1076.0ZM1563.9 1081.4L1570.1 1082.6L1573.0 1086.6L1577.2 1090.3L1580.1 1091.7L1584.4 1094.6L1587.2 1097.4L1588.6 1100.2L1594.3 1103.1L1594.3 1114.5L1588.6 1113.1L1583.8 1108.8L1580.1 1104.5L1578.1 1100.2L1574.4 1096.0L1573.0 1092.6L1570.1 1090.3L1567.3 1086.9L1564.2 1083.7ZM1433.0 1131.8L1435.6 1137.6L1436.2 1142.0L1434.5 1143.5L1433.6 1148.0L1432.2 1152.5L1430.8 1158.5L1429.3 1164.7L1416.0 1164.7L1416.0 1161.6L1416.5 1158.5L1418.5 1155.5L1419.4 1151.0L1418.0 1146.5L1420.2 1144.1L1424.5 1142.6L1427.1 1140.0L1429.3 1136.2L1431.6 1132.7ZM1276.0 988.2L1277.7 987.9L1281.4 990.3L1284.6 990.0L1287.1 990.7L1290.0 988.6L1293.4 987.5L1297.1 985.7L1301.3 984.7L1307.0 984.7L1312.7 984.0L1317.5 984.0L1320.7 982.9L1324.1 984.0L1323.0 986.1L1323.0 988.9L1324.1 991.0L1321.8 993.4L1321.5 995.1L1324.4 996.8L1328.4 998.2L1330.3 998.2L1336.0 1000.2L1337.5 1002.9L1342.6 1004.9L1346.8 1006.9L1349.7 1004.6L1349.7 1001.2L1354.0 998.2L1358.2 998.9L1358.8 1000.6L1363.9 1001.6L1369.6 1003.6L1375.3 1004.9L1378.1 1003.6L1381.0 1002.6L1384.7 1003.6L1385.5 1008.2L1385.8 1011.1L1388.1 1015.0L1389.5 1018.5L1391.8 1023.9L1393.8 1027.0L1394.3 1030.1L1397.5 1033.2L1398.6 1036.3L1398.6 1040.8L1402.3 1045.3L1404.6 1051.3L1406.6 1054.2L1410.0 1057.2L1413.7 1060.1L1416.0 1061.9L1416.0 1064.5L1419.4 1067.7L1423.6 1066.5L1429.3 1065.3L1435.0 1064.2L1438.4 1063.3L1438.2 1067.4L1436.4 1071.7L1433.6 1077.4L1430.8 1083.2L1426.5 1088.9L1420.8 1092.6L1416.5 1096.0L1412.3 1100.2L1409.4 1103.1L1407.1 1105.4L1405.2 1110.2L1403.7 1114.5L1405.2 1117.4L1404.6 1121.7L1406.0 1126.0L1408.0 1128.9L1408.3 1134.7L1408.9 1139.1L1406.6 1143.5L1402.3 1147.1L1398.0 1149.2L1395.2 1152.2L1392.4 1154.9L1391.8 1157.0L1393.2 1160.0L1393.8 1164.7L1333.8 1164.7L1333.8 1161.9L1332.6 1158.5L1330.6 1154.0L1326.9 1149.5L1326.4 1145.0L1327.5 1140.6L1328.4 1136.2L1331.2 1133.2L1332.1 1128.9L1330.3 1123.1L1329.2 1118.8L1327.8 1114.5L1327.5 1111.6L1326.4 1110.2L1324.1 1108.2L1321.2 1105.4L1319.3 1102.5L1317.8 1099.7L1319.8 1096.8L1319.8 1094.6L1320.7 1090.3L1320.1 1087.4L1318.1 1084.6L1314.1 1084.9L1309.9 1085.2L1307.9 1082.6L1305.6 1079.7L1301.3 1079.2L1297.1 1079.7L1292.8 1081.2L1287.7 1083.7L1284.3 1082.9L1280.0 1082.6L1275.7 1083.7L1271.5 1084.9L1267.2 1082.6L1262.1 1078.9L1258.7 1076.0L1255.8 1073.1L1255.0 1070.3L1251.6 1067.4L1250.1 1065.9L1247.3 1063.6L1245.3 1061.6L1245.0 1058.6L1243.3 1055.1L1245.9 1051.3L1246.4 1046.8L1247.0 1042.3L1245.9 1040.8L1244.4 1036.3L1245.9 1031.7L1247.9 1027.0L1250.7 1022.3L1254.4 1017.6L1256.1 1014.7L1260.7 1012.8L1264.4 1009.5L1265.2 1006.2L1264.9 1002.9L1266.6 999.2L1270.0 996.2L1273.5 994.1L1275.7 990.3ZM1072.6 1072.8L1074.3 1074.6L1075.8 1072.0L1077.8 1070.0L1078.0 1067.1L1080.0 1065.6L1084.3 1065.0L1087.4 1063.3L1090.0 1061.9L1090.0 1063.6L1088.3 1065.3L1089.1 1067.4L1090.8 1065.6L1092.8 1064.5L1094.3 1062.4L1095.1 1064.5L1098.5 1065.9L1099.4 1067.4L1105.1 1067.1L1107.9 1068.5L1110.8 1067.4L1115.0 1066.8L1116.7 1066.8L1114.7 1068.2L1119.3 1070.3L1119.9 1073.1L1122.7 1073.7L1126.4 1076.6L1130.1 1080.3L1134.1 1080.6L1139.2 1080.9L1143.5 1083.2L1146.3 1085.2L1147.7 1087.4L1149.2 1091.7L1150.6 1095.1L1150.6 1097.4L1154.8 1098.8L1157.7 1099.1L1162.0 1100.2L1166.2 1103.1L1167.6 1105.1L1171.9 1105.1L1176.2 1105.7L1180.4 1105.9L1183.3 1107.9L1187.0 1110.8L1191.8 1111.9L1193.2 1114.5L1193.8 1118.8L1193.2 1123.1L1190.4 1126.9L1187.6 1129.5L1186.1 1132.4L1183.3 1134.7L1181.9 1137.6L1181.9 1142.0L1182.2 1146.5L1181.0 1149.5L1179.6 1154.0L1178.5 1157.0L1176.2 1161.0L1176.2 1164.7L1093.1 1164.7L1093.1 1155.5L1092.8 1150.7L1089.4 1147.4L1085.2 1145.0L1079.5 1142.0L1076.1 1137.6L1075.8 1135.6L1073.2 1131.8L1070.9 1126.9L1068.7 1121.7L1065.8 1117.4L1062.4 1114.5L1061.5 1110.2L1064.4 1107.1L1065.2 1104.5L1062.7 1103.7L1063.3 1100.2L1065.0 1097.4L1065.2 1095.1L1068.7 1093.1L1069.5 1090.3L1072.4 1087.4L1072.9 1084.6L1072.4 1081.7L1072.9 1078.9L1071.5 1076.6ZM1051.0 1033.5L1053.9 1030.8L1058.1 1029.8L1062.4 1029.8L1066.7 1031.7L1072.4 1034.1L1076.6 1035.7L1080.9 1038.4L1081.7 1039.0L1078.0 1039.6L1072.4 1039.6L1070.9 1037.5L1068.1 1034.8L1063.8 1033.2L1060.1 1032.6L1056.7 1033.2L1053.9 1033.8ZM1081.2 1044.1L1085.2 1044.7L1088.9 1045.9L1092.3 1044.7L1096.5 1044.4L1098.2 1043.5L1096.0 1041.7L1093.7 1040.2L1088.9 1039.9L1085.2 1039.6L1084.0 1040.5L1086.3 1042.3L1086.9 1043.5ZM1070.1 1044.4L1073.8 1043.8L1076.1 1045.3L1073.8 1045.9ZM1101.7 1043.8L1106.2 1044.1L1105.9 1045.3L1101.7 1045.3ZM1116.7 1066.8L1119.3 1066.5L1119.3 1068.5L1116.7 1068.5ZM1070.1 1023.6L1071.5 1023.9L1072.1 1026.4L1070.4 1026.1ZM1324.7 908.3L1328.4 907.8L1328.4 904.3L1325.5 904.8ZM1321.0 908.8L1323.5 908.8L1323.2 906.3L1321.2 906.8ZM1344.6 899.1L1346.6 897.0L1346.8 894.4L1344.9 896.5ZM1328.4 980.4L1331.2 979.7L1337.2 979.7L1336.0 984.0L1333.5 984.3L1328.6 981.8ZM1316.1 968.6L1319.8 968.9L1320.4 973.1L1319.8 976.0L1317.0 976.8L1316.7 971.9ZM1317.3 962.4L1319.5 961.7L1319.8 965.5L1319.0 967.8L1317.5 966.3ZM1359.9 989.3L1362.5 989.6L1367.6 990.3L1366.8 991.0L1362.5 991.0L1359.9 990.3ZM1384.7 991.0L1386.7 990.0L1390.9 988.9L1389.5 991.0L1386.7 992.4L1385.0 992.0ZM1299.6 974.5L1301.9 973.4L1302.5 974.5L1301.0 975.7ZM1444.4 1061.3L1447.8 1061.3L1447.5 1062.1L1444.7 1062.1Z"/></clipPath><filter id="blur6" x="-20%" y="-20%" width="140%" height="140%"><feGaussianBlur stdDeviation="5"/></filter><filter id="blur3" x="-20%" y="-20%" width="140%" height="140%"><feGaussianBlur stdDeviation="2.5"/></filter></defs>
<path d="M994.1 858.5L1034.0 858.5L1034.0 861.7L1029.7 869.8L1025.4 877.0L1023.1 882.8L1024.9 889.5L1029.7 898.1L1036.8 899.1L1042.5 901.7L1051.0 907.8L1058.7 908.8L1059.0 919.0L1062.4 924.6L1064.1 927.3L1068.1 925.9L1068.7 921.3L1068.1 914.2L1066.7 910.3L1072.4 906.8L1074.6 900.7L1073.8 894.9L1069.5 889.5L1071.5 882.8L1070.9 874.0L1072.4 868.6L1079.5 869.2L1083.7 871.0L1089.4 875.8L1093.7 877.0L1094.8 882.8L1095.1 888.4L1099.4 891.1L1105.1 889.5L1107.9 882.8L1109.3 881.1L1112.2 888.4L1115.0 893.8L1117.9 900.2L1122.1 906.8L1127.8 911.8L1130.7 916.6L1134.1 921.3L1133.5 925.0L1126.4 927.3L1122.1 931.8L1113.6 931.4L1103.6 931.8L1099.4 936.2L1094.3 942.2L1095.1 943.1L1099.4 939.2L1105.1 936.6L1109.6 937.5L1107.9 941.4L1107.9 945.6L1109.3 948.9L1112.2 949.7L1116.4 950.5L1119.3 951.3L1122.1 946.4L1122.4 949.7L1119.3 953.0L1112.2 955.8L1106.5 959.7L1104.5 957.7L1106.5 953.8L1109.3 951.7L1105.1 953.4L1102.2 955.0L1098.0 956.6L1093.7 958.9L1091.7 962.4L1091.7 965.5L1093.7 965.9L1093.7 967.4L1089.4 967.8L1085.2 968.9L1082.3 970.8L1082.3 974.9L1079.5 977.5L1078.6 980.4L1076.6 984.0L1077.2 987.5L1078.0 990.3L1074.3 992.4L1070.9 994.8L1066.7 997.9L1062.4 1001.2L1061.5 1006.2L1063.8 1012.8L1065.2 1017.6L1065.0 1021.7L1063.3 1023.6L1061.0 1021.4L1059.6 1018.2L1057.3 1014.4L1057.6 1011.1L1053.9 1007.9L1049.6 1008.5L1046.8 1006.6L1042.5 1006.9L1038.2 1007.2L1039.1 1010.5L1035.4 1010.5L1031.1 1009.2L1025.4 1009.2L1022.0 1011.1L1018.3 1013.7L1016.0 1017.6L1016.3 1020.8L1014.9 1027.0L1014.6 1031.7L1016.0 1036.3L1018.6 1040.8L1021.2 1043.2L1024.0 1044.7L1028.3 1043.8L1032.5 1043.8L1034.8 1040.8L1035.7 1036.3L1041.1 1034.8L1045.3 1034.8L1045.9 1037.8L1043.9 1040.8L1043.1 1044.4L1041.6 1045.3L1041.6 1049.8L1040.2 1051.6L1043.9 1051.9L1048.2 1051.6L1052.4 1051.9L1055.9 1054.2L1055.3 1058.6L1055.0 1063.0L1054.7 1065.9L1056.1 1068.8L1059.0 1071.1L1061.8 1072.3L1065.2 1071.1L1068.1 1070.3L1070.9 1071.7L1072.6 1072.8L1072.1 1075.7L1069.5 1073.7L1066.7 1072.0L1064.1 1073.7L1064.4 1076.3L1061.0 1075.4L1057.3 1073.7L1055.0 1072.6L1051.6 1069.4L1048.7 1067.4L1049.0 1065.3L1045.3 1061.0L1043.3 1059.5L1038.2 1058.6L1034.0 1057.2L1029.7 1054.8L1025.4 1051.3L1022.0 1051.0L1018.3 1052.2L1012.6 1050.4L1008.4 1048.3L1002.7 1045.3L997.8 1042.9L991.3 1039.9L991.3 858.5ZM1124.1 943.1L1127.3 939.2L1126.4 934.9L1129.5 929.6L1131.2 926.4L1134.9 925.5L1133.5 929.1L1132.1 932.7L1134.9 933.1L1139.2 934.9L1140.6 939.2L1142.9 943.1L1141.5 946.8L1139.2 946.0L1136.4 945.6L1133.5 943.1L1129.2 943.1ZM1110.2 946.8L1113.6 947.6L1116.4 948.1L1115.0 949.3L1110.8 948.5ZM1109.3 933.1L1115.0 934.4L1117.0 936.6L1112.2 935.8ZM1083.7 858.5L1088.0 863.6L1093.7 866.1L1099.4 869.2L1105.1 871.6L1107.3 869.8L1104.2 865.5L1100.8 861.7L1099.4 858.5ZM1105.1 858.5L1107.9 863.6L1109.9 863.0L1110.8 858.5ZM1046.8 858.5L1048.7 863.0L1052.4 863.6L1056.1 859.8L1059.6 858.5ZM1056.7 865.5L1060.1 865.5L1061.0 868.0L1058.1 869.2L1056.1 868.0ZM1064.7 869.2L1066.7 869.2L1066.7 872.8L1064.7 872.2ZM1144.9 858.5L1146.3 861.7L1149.2 868.0L1152.0 874.0L1154.8 877.0L1160.5 879.3L1164.8 882.8L1167.6 883.9L1169.9 882.8L1171.1 877.0L1172.5 871.0L1174.8 864.9L1176.7 858.5ZM1276.6 932.2L1281.4 931.4L1284.3 929.6L1288.5 929.6L1293.4 929.1L1296.8 927.3L1295.6 924.6L1297.6 920.9L1293.7 919.0L1292.8 916.1L1291.9 911.8L1288.5 909.3L1287.1 904.8L1284.3 904.3L1287.1 899.1L1287.7 896.0L1282.8 895.4L1281.4 893.8L1284.0 890.6L1278.6 890.6L1277.2 894.9L1275.7 898.1L1276.9 902.7L1278.0 906.8L1279.1 909.8L1282.8 909.8L1284.3 914.2L1284.3 917.1L1280.0 917.5L1280.9 921.3L1278.0 924.6L1281.4 925.5L1284.3 926.9L1280.9 927.8ZM1264.4 925.0L1268.6 925.0L1274.3 922.7L1275.4 918.0L1275.7 913.2L1277.2 911.3L1275.2 908.3L1271.5 907.8L1268.6 911.3L1264.4 913.2L1264.9 917.5L1265.8 920.9L1263.5 923.2ZM1319.8 858.5L1594.3 858.5L1594.3 1067.7L1590.0 1067.7L1585.8 1065.9L1582.9 1062.4L1579.8 1058.9L1577.2 1059.2L1577.0 1063.0L1575.0 1067.4L1575.3 1071.1L1578.1 1073.7L1578.7 1076.9L1581.5 1078.0L1584.4 1080.3L1586.9 1083.7L1587.2 1088.9L1589.2 1093.1L1587.2 1093.7L1583.8 1091.1L1580.9 1088.9L1579.0 1084.6L1578.1 1080.3L1576.4 1078.0L1573.5 1074.6L1572.4 1071.7L1573.3 1067.4L1573.3 1063.0L1572.1 1057.8L1570.7 1054.2L1570.4 1049.8L1568.1 1048.6L1564.2 1051.9L1561.0 1051.3L1561.6 1046.8L1560.7 1042.9L1558.8 1039.9L1555.3 1036.3L1553.9 1032.0L1550.2 1031.1L1547.4 1033.8L1543.7 1034.1L1540.3 1035.1L1539.7 1038.4L1536.0 1040.2L1532.3 1043.5L1527.5 1048.3L1524.6 1050.4L1521.2 1052.8L1520.6 1057.2L1521.2 1060.1L1520.1 1064.5L1519.8 1067.9L1517.5 1070.8L1515.2 1072.0L1513.2 1074.3L1510.4 1071.7L1509.0 1067.4L1507.0 1063.0L1505.3 1058.6L1503.9 1054.2L1501.9 1049.8L1500.4 1045.3L1499.9 1041.7L1499.6 1036.3L1499.0 1034.1L1498.2 1036.3L1494.8 1036.9L1491.9 1035.7L1489.1 1032.3L1492.8 1030.5L1490.5 1030.1L1487.6 1028.6L1484.8 1027.0L1483.4 1024.2L1482.0 1022.7L1476.3 1023.0L1469.2 1023.3L1463.5 1022.7L1459.2 1022.0L1455.5 1020.8L1454.4 1017.6L1450.7 1018.5L1446.4 1018.9L1442.1 1016.0L1438.4 1014.4L1437.0 1009.5L1435.0 1007.2L1431.6 1006.9L1429.6 1008.5L1430.8 1012.8L1433.6 1016.6L1435.6 1019.2L1435.9 1022.3L1437.9 1023.9L1438.7 1020.8L1439.9 1022.3L1439.3 1025.8L1442.1 1026.4L1446.4 1026.7L1449.2 1023.9L1452.4 1020.5L1453.2 1023.9L1454.4 1026.4L1459.2 1028.3L1462.9 1031.7L1461.5 1035.4L1459.2 1037.8L1457.2 1042.3L1453.5 1045.3L1450.1 1047.1L1446.4 1048.3L1441.3 1050.7L1435.0 1054.2L1429.3 1057.2L1422.2 1060.1L1416.8 1061.0L1415.7 1058.6L1414.5 1054.2L1414.3 1049.8L1410.8 1045.3L1408.0 1040.8L1405.2 1036.3L1403.7 1031.7L1400.9 1027.0L1398.6 1023.3L1396.6 1019.2L1392.9 1014.4L1391.8 1009.5L1390.6 1013.7L1390.1 1015.0L1388.1 1012.8L1385.5 1008.2L1384.7 1003.9L1389.5 1003.6L1391.8 1000.6L1392.6 997.2L1394.6 992.7L1395.2 988.2L1395.8 985.0L1393.8 985.4L1390.9 985.0L1388.1 987.2L1383.8 987.2L1379.8 984.7L1376.7 986.8L1373.3 985.0L1370.5 984.0L1370.2 980.7L1367.9 978.9L1369.0 975.7L1367.0 974.9L1367.3 971.9L1366.8 970.1L1363.9 969.7L1361.1 970.5L1360.2 973.1L1357.9 971.6L1357.1 974.9L1358.8 976.8L1361.1 979.7L1361.1 981.5L1358.8 982.5L1358.8 985.7L1356.8 985.7L1354.5 984.7L1353.1 981.1L1352.5 978.6L1351.7 976.8L1349.7 974.2L1348.0 971.2L1348.3 967.4L1347.4 965.5L1345.4 963.6L1342.6 961.7L1338.3 959.7L1336.0 957.0L1334.0 953.0L1331.8 953.8L1331.5 950.9L1327.8 952.1L1328.1 956.6L1331.2 959.3L1333.2 963.6L1336.0 965.5L1338.9 966.3L1338.3 967.8L1342.6 970.1L1345.4 972.3L1344.9 973.8L1341.7 971.6L1339.7 974.2L1341.4 976.8L1339.7 979.3L1337.5 980.7L1338.3 978.2L1337.5 973.8L1335.5 972.3L1333.5 970.5L1329.8 968.2L1327.5 966.3L1324.1 963.6L1322.4 959.7L1320.7 957.4L1317.8 956.2L1314.1 958.5L1311.3 960.9L1307.0 960.1L1304.2 959.7L1301.6 961.7L1301.9 965.5L1299.1 967.8L1295.1 969.3L1292.8 973.1L1291.9 975.3L1293.1 977.5L1290.8 980.4L1290.5 981.8L1287.7 984.0L1285.7 984.7L1280.3 985.0L1277.7 987.2L1275.7 986.8L1274.6 984.7L1271.8 983.3L1267.8 984.0L1267.8 980.4L1266.1 977.5L1267.5 973.1L1268.1 968.6L1267.5 963.6L1266.6 960.9L1270.0 958.9L1275.7 959.3L1281.4 960.1L1287.1 960.1L1288.8 957.7L1289.4 951.7L1289.4 948.9L1286.5 944.7L1282.8 942.2L1279.4 941.4L1279.7 939.2L1284.3 937.9L1288.2 938.4L1288.0 934.0L1289.4 935.3L1293.4 934.9L1297.1 931.8L1297.6 928.7L1299.9 927.8L1302.8 926.4L1304.7 922.7L1306.5 919.0L1308.4 917.1L1312.7 916.6L1315.6 915.6L1317.5 914.2L1317.3 909.3L1315.8 906.3L1316.1 900.2L1319.8 898.1L1322.7 895.4L1325.5 892.2L1324.7 888.4L1323.2 886.7L1321.8 888.4L1319.8 889.5L1317.0 892.7L1312.7 893.8L1309.0 890.6L1307.6 885.6L1307.0 879.9L1307.0 874.0L1307.9 869.8L1311.3 866.7L1314.1 864.2L1317.0 862.3ZM1519.8 1069.7L1521.2 1069.7L1523.8 1073.1L1525.5 1076.0L1524.9 1078.9L1522.1 1080.6L1520.4 1079.7L1519.8 1076.0ZM1563.9 1081.4L1570.1 1082.6L1573.0 1086.6L1577.2 1090.3L1580.1 1091.7L1584.4 1094.6L1587.2 1097.4L1588.6 1100.2L1594.3 1103.1L1594.3 1114.5L1588.6 1113.1L1583.8 1108.8L1580.1 1104.5L1578.1 1100.2L1574.4 1096.0L1573.0 1092.6L1570.1 1090.3L1567.3 1086.9L1564.2 1083.7ZM1433.0 1131.8L1435.6 1137.6L1436.2 1142.0L1434.5 1143.5L1433.6 1148.0L1432.2 1152.5L1430.8 1158.5L1429.3 1164.7L1416.0 1164.7L1416.0 1161.6L1416.5 1158.5L1418.5 1155.5L1419.4 1151.0L1418.0 1146.5L1420.2 1144.1L1424.5 1142.6L1427.1 1140.0L1429.3 1136.2L1431.6 1132.7ZM1276.0 988.2L1277.7 987.9L1281.4 990.3L1284.6 990.0L1287.1 990.7L1290.0 988.6L1293.4 987.5L1297.1 985.7L1301.3 984.7L1307.0 984.7L1312.7 984.0L1317.5 984.0L1320.7 982.9L1324.1 984.0L1323.0 986.1L1323.0 988.9L1324.1 991.0L1321.8 993.4L1321.5 995.1L1324.4 996.8L1328.4 998.2L1330.3 998.2L1336.0 1000.2L1337.5 1002.9L1342.6 1004.9L1346.8 1006.9L1349.7 1004.6L1349.7 1001.2L1354.0 998.2L1358.2 998.9L1358.8 1000.6L1363.9 1001.6L1369.6 1003.6L1375.3 1004.9L1378.1 1003.6L1381.0 1002.6L1384.7 1003.6L1385.5 1008.2L1385.8 1011.1L1388.1 1015.0L1389.5 1018.5L1391.8 1023.9L1393.8 1027.0L1394.3 1030.1L1397.5 1033.2L1398.6 1036.3L1398.6 1040.8L1402.3 1045.3L1404.6 1051.3L1406.6 1054.2L1410.0 1057.2L1413.7 1060.1L1416.0 1061.9L1416.0 1064.5L1419.4 1067.7L1423.6 1066.5L1429.3 1065.3L1435.0 1064.2L1438.4 1063.3L1438.2 1067.4L1436.4 1071.7L1433.6 1077.4L1430.8 1083.2L1426.5 1088.9L1420.8 1092.6L1416.5 1096.0L1412.3 1100.2L1409.4 1103.1L1407.1 1105.4L1405.2 1110.2L1403.7 1114.5L1405.2 1117.4L1404.6 1121.7L1406.0 1126.0L1408.0 1128.9L1408.3 1134.7L1408.9 1139.1L1406.6 1143.5L1402.3 1147.1L1398.0 1149.2L1395.2 1152.2L1392.4 1154.9L1391.8 1157.0L1393.2 1160.0L1393.8 1164.7L1333.8 1164.7L1333.8 1161.9L1332.6 1158.5L1330.6 1154.0L1326.9 1149.5L1326.4 1145.0L1327.5 1140.6L1328.4 1136.2L1331.2 1133.2L1332.1 1128.9L1330.3 1123.1L1329.2 1118.8L1327.8 1114.5L1327.5 1111.6L1326.4 1110.2L1324.1 1108.2L1321.2 1105.4L1319.3 1102.5L1317.8 1099.7L1319.8 1096.8L1319.8 1094.6L1320.7 1090.3L1320.1 1087.4L1318.1 1084.6L1314.1 1084.9L1309.9 1085.2L1307.9 1082.6L1305.6 1079.7L1301.3 1079.2L1297.1 1079.7L1292.8 1081.2L1287.7 1083.7L1284.3 1082.9L1280.0 1082.6L1275.7 1083.7L1271.5 1084.9L1267.2 1082.6L1262.1 1078.9L1258.7 1076.0L1255.8 1073.1L1255.0 1070.3L1251.6 1067.4L1250.1 1065.9L1247.3 1063.6L1245.3 1061.6L1245.0 1058.6L1243.3 1055.1L1245.9 1051.3L1246.4 1046.8L1247.0 1042.3L1245.9 1040.8L1244.4 1036.3L1245.9 1031.7L1247.9 1027.0L1250.7 1022.3L1254.4 1017.6L1256.1 1014.7L1260.7 1012.8L1264.4 1009.5L1265.2 1006.2L1264.9 1002.9L1266.6 999.2L1270.0 996.2L1273.5 994.1L1275.7 990.3ZM1072.6 1072.8L1074.3 1074.6L1075.8 1072.0L1077.8 1070.0L1078.0 1067.1L1080.0 1065.6L1084.3 1065.0L1087.4 1063.3L1090.0 1061.9L1090.0 1063.6L1088.3 1065.3L1089.1 1067.4L1090.8 1065.6L1092.8 1064.5L1094.3 1062.4L1095.1 1064.5L1098.5 1065.9L1099.4 1067.4L1105.1 1067.1L1107.9 1068.5L1110.8 1067.4L1115.0 1066.8L1116.7 1066.8L1114.7 1068.2L1119.3 1070.3L1119.9 1073.1L1122.7 1073.7L1126.4 1076.6L1130.1 1080.3L1134.1 1080.6L1139.2 1080.9L1143.5 1083.2L1146.3 1085.2L1147.7 1087.4L1149.2 1091.7L1150.6 1095.1L1150.6 1097.4L1154.8 1098.8L1157.7 1099.1L1162.0 1100.2L1166.2 1103.1L1167.6 1105.1L1171.9 1105.1L1176.2 1105.7L1180.4 1105.9L1183.3 1107.9L1187.0 1110.8L1191.8 1111.9L1193.2 1114.5L1193.8 1118.8L1193.2 1123.1L1190.4 1126.9L1187.6 1129.5L1186.1 1132.4L1183.3 1134.7L1181.9 1137.6L1181.9 1142.0L1182.2 1146.5L1181.0 1149.5L1179.6 1154.0L1178.5 1157.0L1176.2 1161.0L1176.2 1164.7L1093.1 1164.7L1093.1 1155.5L1092.8 1150.7L1089.4 1147.4L1085.2 1145.0L1079.5 1142.0L1076.1 1137.6L1075.8 1135.6L1073.2 1131.8L1070.9 1126.9L1068.7 1121.7L1065.8 1117.4L1062.4 1114.5L1061.5 1110.2L1064.4 1107.1L1065.2 1104.5L1062.7 1103.7L1063.3 1100.2L1065.0 1097.4L1065.2 1095.1L1068.7 1093.1L1069.5 1090.3L1072.4 1087.4L1072.9 1084.6L1072.4 1081.7L1072.9 1078.9L1071.5 1076.6ZM1051.0 1033.5L1053.9 1030.8L1058.1 1029.8L1062.4 1029.8L1066.7 1031.7L1072.4 1034.1L1076.6 1035.7L1080.9 1038.4L1081.7 1039.0L1078.0 1039.6L1072.4 1039.6L1070.9 1037.5L1068.1 1034.8L1063.8 1033.2L1060.1 1032.6L1056.7 1033.2L1053.9 1033.8ZM1081.2 1044.1L1085.2 1044.7L1088.9 1045.9L1092.3 1044.7L1096.5 1044.4L1098.2 1043.5L1096.0 1041.7L1093.7 1040.2L1088.9 1039.9L1085.2 1039.6L1084.0 1040.5L1086.3 1042.3L1086.9 1043.5ZM1070.1 1044.4L1073.8 1043.8L1076.1 1045.3L1073.8 1045.9ZM1101.7 1043.8L1106.2 1044.1L1105.9 1045.3L1101.7 1045.3ZM1116.7 1066.8L1119.3 1066.5L1119.3 1068.5L1116.7 1068.5ZM1070.1 1023.6L1071.5 1023.9L1072.1 1026.4L1070.4 1026.1ZM1324.7 908.3L1328.4 907.8L1328.4 904.3L1325.5 904.8ZM1321.0 908.8L1323.5 908.8L1323.2 906.3L1321.2 906.8ZM1344.6 899.1L1346.6 897.0L1346.8 894.4L1344.9 896.5ZM1328.4 980.4L1331.2 979.7L1337.2 979.7L1336.0 984.0L1333.5 984.3L1328.6 981.8ZM1316.1 968.6L1319.8 968.9L1320.4 973.1L1319.8 976.0L1317.0 976.8L1316.7 971.9ZM1317.3 962.4L1319.5 961.7L1319.8 965.5L1319.0 967.8L1317.5 966.3ZM1359.9 989.3L1362.5 989.6L1367.6 990.3L1366.8 991.0L1362.5 991.0L1359.9 990.3ZM1384.7 991.0L1386.7 990.0L1390.9 988.9L1389.5 991.0L1386.7 992.4L1385.0 992.0ZM1299.6 974.5L1301.9 973.4L1302.5 974.5L1301.0 975.7ZM1444.4 1061.3L1447.8 1061.3L1447.5 1062.1L1444.7 1062.1Z" fill="#f9f7e9"/>
<g clip-path="url(#landclip)"><g filter="url(#blur6)"><path d="M1011.2 851.9L1122.1 851.9L1150.6 923.6L1150.6 953.8L1105.1 969.3L1085.2 980.4L1082.3 994.5L1070.9 1004.6L1069.5 1027.0L1056.7 1027.0L1053.9 1012.8L1036.8 1014.4L1022.6 1014.4L1012.6 1019.2L1009.8 1004.6L1012.6 987.5L1015.5 965.5L1012.6 939.2L999.8 932.7L985.6 919.0L985.6 851.9Z" fill="#c3ddb0"/><path d="M1062.4 851.9L1122.1 851.9L1127.8 904.3L1113.6 921.3L1088.0 921.3L1070.9 914.2L1065.2 893.8Z" fill="#d6e6c3" fill-opacity="0.75"/><path d="M985.6 851.9L1031.1 851.9L1028.3 891.1L1008.4 896.5L985.6 893.8Z" fill="#d6e6c3" fill-opacity="0.8"/><path d="M985.6 932.7L1008.4 941.4L1012.6 965.5L1011.2 994.5L1005.5 1011.1L985.6 1007.9Z" fill="#f2eed9" fill-opacity="0.75"/><path d="M1031.1 945.6L1053.9 945.6L1065.2 961.7L1053.9 973.1L1034.0 969.3Z" fill="#d6e6c3" fill-opacity="0.45"/><path d="M985.6 848.5L1025.4 848.5L1022.6 879.9L985.6 885.6Z" fill="#eef0dd" fill-opacity="0.8"/><path d="M985.6 899.1L1002.7 899.1L1005.5 937.1L985.6 937.1Z" fill="#f2eed9" fill-opacity="0.55"/><path d="M1068.1 1068.8L1116.4 1061.6L1150.6 1080.3L1170.5 1100.2L1176.2 1120.2L1170.5 1143.5L1176.2 1167.8L1122.1 1167.8L1105.1 1167.8L1099.4 1149.5L1088.0 1137.6L1076.6 1126.0L1066.7 1111.6L1063.8 1097.4L1070.9 1083.2Z" fill="#c3ddb0"/><path d="M1072.4 1091.7L1082.3 1083.2L1099.4 1080.3L1122.1 1081.7L1144.9 1084.6L1153.4 1097.4L1162.0 1105.9L1156.3 1123.1L1136.4 1134.7L1116.4 1137.6L1099.4 1134.7L1088.0 1128.9L1079.5 1120.2L1070.9 1108.8Z" fill="#b6d6a3" fill-opacity="0.95"/><path d="M1164.8 1100.2L1198.9 1108.8L1198.9 1126.0L1187.6 1143.5L1181.9 1167.8L1153.4 1167.8L1159.1 1137.6L1162.0 1120.2Z" fill="#e4ebcb" fill-opacity="0.9"/><path d="M1085.2 1067.4L1116.4 1067.4L1119.3 1076.0L1099.4 1078.9L1088.0 1076.0Z" fill="#d6e6c3" fill-opacity="0.6"/><path d="M1261.5 957.7L1287.1 957.7L1298.5 959.7L1315.6 955.8L1332.6 949.7L1349.7 965.5L1358.2 973.1L1372.4 969.3L1378.1 949.7L1406.6 945.6L1435.0 932.7L1463.5 928.2L1463.5 851.9L1301.3 851.9L1301.3 893.8L1287.1 928.2L1261.5 923.6Z" fill="#d6e6c3"/><path d="M1312.7 949.7L1349.7 947.6L1375.3 965.5L1369.6 987.5L1349.7 987.5L1335.5 984.0L1326.9 969.3L1315.6 957.7Z" fill="#d6e6c3" fill-opacity="0.9"/><path d="M1264.4 959.7L1301.3 961.7L1295.6 980.4L1275.7 988.6L1264.4 984.0Z" fill="#e4ebcb" fill-opacity="0.9"/><path d="M1301.3 851.9L1600.0 851.9L1600.0 932.7L1571.6 934.9L1543.1 932.7L1531.7 928.2L1514.7 916.6L1497.6 911.8L1469.2 914.2L1449.2 923.6L1435.0 923.6L1423.6 930.5L1406.6 928.2L1389.5 923.6L1372.4 921.3L1355.4 909.3L1344.0 901.7L1326.9 901.7L1315.6 893.8L1301.3 882.8Z" fill="#c3ddb0"/><path d="M1452.1 851.9L1600.0 851.9L1600.0 877.0L1548.8 882.8L1506.1 877.0L1463.5 871.0Z" fill="#d6e6c3" fill-opacity="0.55"/><path d="M1400.9 893.8L1452.1 882.8L1463.5 904.3L1435.0 914.2L1406.6 914.2Z" fill="#d6e6c3" fill-opacity="0.35"/><path d="M1491.9 959.7L1520.4 957.7L1537.4 934.9L1554.5 928.2L1531.7 925.9L1514.7 949.7L1491.9 965.5Z" fill="#d6e6c3" fill-opacity="0.55"/><path d="M1240.2 1058.6L1258.7 1060.1L1281.4 1061.6L1307.0 1063.0L1332.6 1065.9L1361.1 1067.4L1383.8 1065.9L1395.2 1058.6L1406.6 1058.6L1409.4 1074.6L1400.9 1086.0L1395.2 1097.4L1400.9 1111.6L1409.4 1128.9L1412.3 1143.5L1395.2 1155.5L1395.2 1167.8L1355.4 1167.8L1349.7 1149.5L1326.9 1143.5L1321.2 1111.6L1312.7 1088.9L1304.2 1083.2L1278.6 1086.0L1267.2 1087.4L1250.1 1071.7L1238.8 1063.0Z" fill="#c3ddb0"/><path d="M1315.6 1081.7L1335.5 1078.9L1361.1 1080.3L1379.6 1088.9L1379.6 1105.9L1372.4 1115.9L1349.7 1118.8L1328.4 1114.5L1317.0 1103.1Z" fill="#b6d6a3" fill-opacity="0.95"/><path d="M1247.3 1064.5L1264.4 1068.8L1278.6 1074.6L1298.5 1074.6L1315.6 1076.0L1319.8 1087.4L1307.0 1087.4L1284.3 1086.0L1270.0 1087.4L1253.0 1076.0Z" fill="#b6d6a3" fill-opacity="0.7"/><path d="M1324.1 1124.5L1355.4 1127.4L1378.1 1124.5L1395.2 1128.9L1412.3 1131.8L1412.3 1146.5L1395.2 1167.8L1349.7 1167.8L1324.1 1146.5Z" fill="#d6e6c3" fill-opacity="0.7"/><path d="M1240.2 1048.9L1292.8 1050.4L1335.5 1053.4L1378.1 1056.3L1400.9 1051.9L1400.9 1063.0L1335.5 1067.4L1240.2 1061.6Z" fill="#e4ebcb" fill-opacity="0.75"/><path d="M1392.4 1055.7L1406.6 1055.7L1412.3 1071.7L1403.7 1083.2L1392.4 1083.2L1389.5 1071.7Z" fill="#c3ddb0" fill-opacity="0.9"/><path d="M1402.3 1086.0L1418.0 1071.7L1429.3 1067.4L1440.7 1063.0L1432.2 1086.0L1415.1 1103.1L1406.6 1110.2L1402.3 1103.1Z" fill="#e4ebcb" fill-opacity="0.85"/><path d="M1326.9 1143.5L1349.7 1148.0L1352.5 1167.8L1326.9 1167.8Z" fill="#f2eed9" fill-opacity="0.85"/><path d="M1484.8 1027.0L1497.6 1007.9L1509.0 999.6L1520.4 1008.9L1543.1 1015.3L1554.5 1016.9L1554.5 1036.3L1540.3 1040.8L1520.4 1061.6L1514.7 1077.4L1506.1 1067.4L1497.6 1039.3Z" fill="#e4ebcb" fill-opacity="0.95"/><path d="M1543.1 1013.4L1571.6 1010.2L1577.2 1033.2L1580.1 1048.3L1574.4 1068.8L1571.6 1076.0L1568.7 1051.3L1560.2 1052.8L1553.1 1037.8L1543.1 1033.8Z" fill="#c3ddb0"/><path d="M1568.7 1010.2L1600.0 1010.2L1600.0 1077.4L1585.8 1096.0L1575.8 1086.0L1571.6 1071.7L1571.6 1048.3L1568.7 1033.2Z" fill="#c3ddb0"/><path d="M1571.6 992.7L1600.0 989.3L1600.0 1011.1L1571.6 1011.1Z" fill="#d6e6c3" fill-opacity="0.8"/><path d="M1423.6 930.5L1463.5 921.3L1506.1 916.6L1534.6 934.9L1577.2 939.2L1605.7 939.2L1605.7 980.4L1563.0 984.0L1520.4 984.0L1491.9 985.7L1469.2 980.4L1446.4 973.1L1423.6 957.7Z" fill="#f1ecd2" fill-opacity="0.9"/><path d="M1366.8 973.1L1418.0 971.2L1429.3 980.4L1463.5 982.2L1491.9 985.7L1500.4 1004.6L1480.5 1022.3L1463.5 1022.3L1452.1 1016.0L1437.9 1007.9L1420.8 989.3L1395.2 986.8L1369.6 984.0Z" fill="#f1ecd2" fill-opacity="0.55"/><path d="M1509.0 985.7L1571.6 984.0L1574.4 1002.9L1554.5 1010.5L1531.7 1007.2L1514.7 996.2Z" fill="#f1efe6" fill-opacity="0.9"/></g><g filter="url(#blur3)"><path d="M1011.2 1039.3L1019.7 1039.3L1034.0 1040.8L1035.4 1033.2L1048.2 1033.2L1045.3 1049.8L1056.7 1051.3L1058.1 1071.7L1073.8 1077.4L1068.1 1078.9L1053.9 1074.6L1042.5 1061.6L1028.3 1055.7L1016.9 1052.8L1005.5 1048.3Z" fill="#c3ddb0"/><path d="M1049.6 1028.0L1082.3 1037.2L1099.4 1040.2L1099.4 1047.4L1079.5 1047.4L1049.6 1036.3Z" fill="#c3ddb0"/><path d="M1059.6 1105.9L1069.5 1108.8L1079.5 1128.9L1090.8 1140.6L1099.4 1146.5L1102.2 1167.8L1088.0 1167.8L1073.8 1137.6L1059.6 1114.5Z" fill="#f2eed9" fill-opacity="0.8"/><path d="M1261.5 882.8L1301.3 882.8L1301.3 934.9L1261.5 934.9Z" fill="#d6e6c3"/><path d="M1264.4 955.8L1290.0 955.8L1290.0 963.2L1264.4 964.4Z" fill="#d6e6c3" fill-opacity="0.9"/><path d="M1400.9 951.7L1429.3 959.7L1432.2 971.2L1412.3 970.5L1398.0 957.7Z" fill="#d6e6c3" fill-opacity="0.9"/><path d="M1369.6 964.4L1412.3 964.4L1412.3 970.8L1369.6 971.9Z" fill="#d6e6c3" fill-opacity="0.7"/><path d="M1430.8 976.8L1447.8 981.5L1447.8 986.5L1432.2 985.0Z" fill="#c3ddb0" fill-opacity="0.9"/><path d="M1390.9 983.3L1398.0 982.5L1396.6 997.9L1390.9 1002.9Z" fill="#d6e6c3" fill-opacity="0.7"/><path d="M1262.9 1004.6L1274.3 986.5L1292.8 984.7L1321.2 981.1L1325.5 991.0L1309.9 993.4L1290.0 996.8L1275.7 1003.6L1264.4 1010.2Z" fill="#d6e6c3" fill-opacity="0.9"/><path d="M1413.7 1128.9L1437.9 1128.9L1437.9 1167.8L1413.7 1167.8Z" fill="#d6e6c3" fill-opacity="0.9"/><path d="M1498.5 1034.8L1505.0 1034.8L1514.1 1071.7L1512.4 1076.0L1507.0 1068.8L1499.3 1048.3Z" fill="#c3ddb0" fill-opacity="0.9"/><path d="M1500.4 990.0L1514.7 1000.2L1531.7 1011.1L1554.5 1013.7L1568.7 1010.2L1568.7 1017.6L1543.1 1020.1L1520.4 1014.1L1506.1 1003.6L1497.6 994.5Z" fill="#c3ddb0" fill-opacity="0.85"/><path d="M1560.2 1077.4L1600.0 1096.0L1600.0 1117.4L1577.2 1110.2L1560.2 1086.0Z" fill="#b6d6a3" fill-opacity="0.95"/><path d="M1518.9 1068.8L1526.0 1068.8L1526.0 1081.2L1518.9 1081.2Z" fill="#c3ddb0"/><path d="M1139.2 851.9L1181.9 851.9L1173.3 888.4L1162.0 888.4L1144.9 871.0Z" fill="#fbfbf9"/><path d="M1079.5 851.9L1113.6 851.9L1113.6 874.0L1093.7 869.2Z" fill="#fbfbf9" fill-opacity="0.8"/><path d="M1042.5 851.9L1068.1 851.9L1068.1 874.0L1053.9 871.0Z" fill="#fbfbf9" fill-opacity="0.6"/></g></g><path d="M1323.0 894.9L1326.1 894.4L1326.9 899.1L1328.6 902.7L1329.2 906.3L1329.8 907.3L1333.2 907.3L1333.5 904.3L1338.3 903.2L1339.7 899.1L1340.3 893.8L1342.6 890.0L1345.4 885.6L1342.6 879.3L1341.7 874.0L1342.6 869.2L1345.4 864.9L1348.3 861.7L1348.8 857.2L1357.1 857.2L1356.2 861.7L1354.0 864.9L1353.4 871.0L1354.0 877.0L1353.4 879.9L1356.8 882.2L1358.2 883.3L1363.9 881.6L1371.0 879.9L1375.3 881.6L1378.7 883.3L1375.3 883.9L1372.4 885.6L1366.8 885.6L1363.1 885.6L1359.6 887.3L1359.6 891.7L1361.9 892.2L1361.9 897.5L1358.8 899.1L1356.8 895.4L1354.2 896.5L1352.5 900.2L1352.5 906.8L1349.7 909.8L1348.3 912.2L1346.0 912.2L1344.0 910.3L1339.7 911.8L1333.5 914.2L1331.2 912.2L1327.8 912.7L1324.1 914.2L1323.5 914.2L1321.2 911.8L1320.7 909.3L1321.2 905.3L1322.1 902.7L1323.5 902.7L1322.1 900.2L1322.7 896.5ZM1375.6 968.6L1382.4 968.6L1388.1 965.5L1392.4 965.5L1396.6 968.2L1402.3 969.3L1406.6 969.3L1411.1 967.4L1410.8 962.8L1406.6 959.7L1402.3 956.2L1398.9 953.8L1396.9 952.5L1393.8 953.8L1392.4 954.6L1389.5 956.2L1388.1 955.4L1388.1 953.0L1385.2 951.7L1388.1 949.7L1383.8 948.5L1381.0 947.2L1379.6 949.7L1377.3 953.0L1374.7 955.8L1374.2 959.7L1372.2 962.4L1371.9 964.8L1373.0 967.1ZM1396.9 952.1L1392.4 950.9L1392.4 948.5L1396.6 946.8L1400.9 945.2L1404.6 945.2L1402.3 948.5L1400.3 950.5L1398.9 952.1ZM1369.6 970.8L1372.4 969.3L1376.1 970.1L1375.3 971.6L1371.0 971.6ZM1427.9 950.9L1432.2 947.6L1437.9 946.4L1443.6 947.6L1443.6 952.5L1439.3 953.8L1437.9 955.8L1435.9 956.6L1439.3 960.9L1442.1 962.4L1442.7 967.4L1446.4 969.7L1443.6 973.1L1445.5 976.0L1445.8 982.2L1443.6 984.3L1439.3 985.0L1435.6 982.5L1432.2 978.9L1432.2 974.9L1433.6 971.2L1430.8 966.3L1427.9 961.7L1427.9 957.7L1425.9 955.0ZM1459.2 953.0L1462.0 948.5L1464.9 947.6L1463.5 951.7L1462.0 954.6L1460.1 955.4ZM1501.9 950.5L1504.7 947.6L1510.4 946.4L1516.1 947.2L1517.5 948.5L1511.8 948.9L1506.1 950.9L1503.3 953.0ZM1509.8 963.6L1513.2 962.4L1515.5 963.6L1512.7 965.1ZM1031.1 946.8L1035.4 944.7L1039.6 941.4L1042.5 937.9L1046.8 938.4L1051.0 941.8L1051.9 946.0L1049.6 946.8L1045.3 947.6L1041.1 946.0L1036.8 947.2ZM1043.1 965.5L1045.3 966.7L1047.3 963.6L1047.3 957.7L1049.6 953.8L1051.0 950.5L1048.2 950.5L1045.3 953.0L1043.1 955.8L1043.3 961.7ZM1052.4 950.1L1055.3 949.3L1059.6 949.7L1062.4 951.3L1065.2 954.6L1063.8 955.8L1061.0 955.8L1060.4 960.9L1058.4 961.7L1057.8 958.5L1055.6 958.5L1054.7 959.3L1055.9 954.6L1055.3 952.5ZM1055.9 966.7L1058.1 967.8L1062.4 966.3L1066.7 964.0L1068.4 962.4L1066.7 962.4L1062.4 963.2L1058.1 965.5ZM1065.8 960.5L1069.5 960.5L1073.8 960.5L1075.8 959.7L1075.8 957.4L1072.4 957.7L1068.1 958.9ZM1011.8 930.9L1018.3 930.5L1015.5 923.6L1012.6 916.6L1010.6 916.6L1013.2 925.9ZM1006.9 925.9L1009.8 924.6L1008.4 919.0L1006.1 919.9ZM1039.6 934.9L1042.5 934.9L1041.9 931.4L1039.6 931.8ZM1094.3 942.2L1092.3 944.7L1090.3 946.4L1092.8 945.6L1095.1 943.1ZM1383.3 1100.0L1386.7 1096.5L1389.5 1096.5L1390.1 1100.2L1388.9 1103.9L1386.1 1104.8L1383.3 1103.9ZM1375.9 1107.1L1377.3 1107.1L1377.6 1111.6L1379.8 1117.4L1381.5 1122.2L1379.8 1122.0L1377.0 1115.9L1375.9 1111.6ZM1389.5 1124.8L1391.2 1124.8L1392.1 1131.8L1393.2 1138.5L1391.5 1138.5L1390.4 1131.8ZM1394.6 1084.6L1396.1 1084.9L1396.9 1090.0L1395.5 1090.0ZM1379.3 1094.0L1382.1 1090.9L1382.7 1091.1L1380.4 1094.3ZM1379.6 882.8L1382.4 874.0L1386.7 876.4L1386.1 881.6L1382.4 883.3ZM1390.9 877.0L1393.2 868.0L1395.2 871.0L1394.6 877.0ZM1328.4 891.1L1330.6 886.7L1332.6 888.4L1330.6 891.7ZM1088.3 1066.5L1090.0 1066.2L1090.8 1068.8L1090.0 1071.1L1088.0 1070.3ZM1048.5 1062.7L1050.2 1062.7L1051.6 1065.6L1049.6 1065.3ZM1093.7 1141.4L1095.7 1142.0L1097.1 1144.7L1094.8 1144.4ZM1421.1 979.7L1422.8 980.0L1423.1 983.3L1421.7 983.3ZM1413.7 977.5L1416.5 977.1L1416.0 978.9L1413.7 978.9Z" fill="#a3ccff"/><g clip-path="url(#landclip)" fill="none" stroke-linejoin="round"><path d="M991.3 953.8L997.0 953.8L997.0 969.3L1002.7 969.3L1002.7 984.0L1023.7 984.0L1023.7 995.8L1025.4 997.9L1025.4 1008.5M997.0 937.1L997.0 953.8M997.0 961.7L1018.3 961.7L1018.3 950.1L997.0 950.1M1016.3 937.1L1018.3 950.1M1018.3 961.7L1020.3 973.1L1023.7 976.8L1023.7 984.0M1002.7 973.1L1021.7 973.1M1033.4 959.7L1018.3 959.7M1033.4 970.8L1020.3 970.8M1030.3 946.8L1028.8 951.7L1033.4 959.7L1033.4 970.8L1036.2 977.5L1039.1 984.0M1035.1 963.6L1043.1 963.6M1043.9 966.7L1043.9 980.4L1042.5 981.1M1051.6 966.7L1051.6 976.4M1051.6 966.7L1045.3 966.7M1063.8 965.5L1063.8 970.8M1039.1 984.0L1042.5 981.1L1051.6 976.4L1057.8 978.9L1059.8 982.2L1054.7 985.4L1038.2 985.7M1063.8 970.8L1066.7 974.2L1077.2 974.2M1065.8 965.5L1078.6 965.5L1083.7 969.3M1054.7 985.4L1076.9 985.7M1041.9 991.0L1056.7 991.0L1062.4 990.7L1069.5 994.8M1049.3 991.0L1051.0 1000.2L1051.0 1004.6L1043.6 1004.6L1043.6 1006.6M1041.9 991.0L1041.4 1006.6M1051.0 1004.6L1059.6 1005.9M1033.4 997.9L1025.4 997.9M1033.4 997.9L1032.2 1004.6L1037.7 1004.6L1037.7 1006.9M1035.9 991.0L1033.4 997.9M999.8 985.7L1008.4 985.7L1008.4 992.7L1023.7 995.8M991.3 1001.2L999.8 1001.2L999.8 985.7M1084.0 953.8L1084.3 962.8L1083.7 969.3M1089.4 953.8L1086.6 962.8L1084.3 962.8M1090.8 952.5L1091.4 961.3M1086.6 962.8L1091.4 962.4M1004.4 937.1L1002.7 882.8L991.3 882.8M1022.0 937.1L1022.0 919.9L1039.6 899.6M1002.7 882.8L1023.1 882.8M1066.7 925.9L1066.7 944.3L1073.8 950.1L1080.9 953.4M1130.4 925.9L1110.8 923.6L1102.2 909.3L1109.3 881.1M1096.5 941.4L1099.9 945.6M1110.8 949.7L1109.3 948.9M1156.3 1100.2L1154.8 1111.6L1162.0 1114.5L1162.0 1126.0L1167.6 1127.4L1162.0 1134.7L1162.0 1140.6L1173.3 1140.6L1179.0 1143.5L1180.4 1149.5M1127.8 1100.2L1132.1 1111.6L1127.8 1118.8L1117.9 1123.1L1122.1 1128.9L1121.6 1136.7M1127.8 1118.8L1147.7 1125.4L1150.6 1134.7L1142.0 1148.0L1147.7 1154.0L1147.7 1157.0L1167.6 1163.1L1176.2 1159.4M1150.6 1134.7L1162.0 1134.7M1094.0 1109.4L1113.6 1103.1L1127.8 1100.2L1133.5 1091.7M1167.6 1105.1L1170.5 1114.5L1176.2 1117.4L1177.6 1105.9M1176.2 1117.4L1183.3 1118.8L1193.2 1115.9M1176.2 1117.4L1179.0 1124.5L1184.7 1123.1L1189.0 1127.4M1147.7 1125.4L1154.8 1111.6M1142.0 1148.0L1127.8 1148.0M1147.7 1154.0L1159.1 1152.5L1162.0 1140.6M1499.0 1034.8L1503.3 1033.2L1504.7 1025.5L1509.0 1025.5L1511.8 1020.8L1514.7 1017.6L1520.4 1012.8M1503.3 1033.2L1520.4 1034.8L1526.0 1033.2L1531.7 1033.2L1540.3 1034.1M1511.8 1020.8L1520.4 1023.9L1531.7 1025.5L1543.1 1024.9M1504.7 1052.8L1511.8 1046.8L1520.4 1048.3L1521.8 1042.3L1533.2 1042.3M1511.8 1046.8L1513.2 1058.6L1520.4 1058.6M1506.1 1063.0L1511.8 1064.5L1513.2 1073.1" stroke="#b9c2a8" stroke-width=".4" stroke-opacity=".55"/><path d="M991.3 1001.9L995.6 1008.9L999.8 1011.1L1001.2 1008.5L1004.4 1008.5L1007.5 1013.4L1009.8 1016.0L1011.2 1019.5L1016.3 1021.1M1030.5 1055.7L1030.5 1053.6L1032.0 1051.0L1035.7 1051.0L1035.4 1047.7L1034.0 1047.7L1034.0 1045.9L1039.1 1045.9L1039.4 1045.3L1041.6 1043.8M1039.1 1045.9L1039.1 1051.6L1039.9 1051.6M1039.1 1051.6L1038.8 1056.0L1036.5 1057.8M1038.8 1056.0L1041.1 1057.5L1043.1 1058.9M1044.5 1060.1L1046.2 1057.8L1049.0 1057.5L1051.6 1054.8L1056.1 1054.2M1049.0 1065.6L1051.9 1065.9L1054.7 1066.5M1057.0 1074.3L1057.3 1071.7L1057.8 1070.0M1071.2 1076.9L1072.9 1072.8M1088.9 1040.2L1088.9 1045.3M1090.0 1063.6L1087.1 1065.6L1085.2 1070.8L1086.9 1073.4L1088.0 1077.4L1093.4 1077.4L1095.4 1080.0L1100.8 1079.7L1099.9 1084.6L1101.4 1087.7L1099.7 1092.3L1102.5 1094.0M1102.5 1094.0L1098.8 1092.3L1094.3 1092.6L1095.1 1095.4L1093.7 1097.4L1094.8 1100.2L1094.0 1109.4M1094.0 1109.4L1091.7 1108.2L1085.4 1104.2L1083.2 1100.8L1078.6 1097.7L1075.8 1096.3L1072.4 1095.1L1068.7 1093.4M1078.6 1097.7L1077.8 1101.7L1074.6 1104.8L1070.4 1107.4L1068.1 1111.6L1064.4 1109.9L1064.4 1107.1M1094.0 1109.4L1085.4 1112.2L1082.6 1118.2L1085.4 1123.4L1087.4 1126.0L1092.0 1124.5L1092.0 1128.9L1094.8 1128.9M1094.8 1128.9L1097.4 1133.2L1096.5 1136.7L1095.4 1142.3L1096.5 1144.1L1095.1 1148.0L1092.6 1150.4M1094.8 1128.9L1098.5 1128.9L1103.4 1125.7L1107.1 1125.4L1107.1 1130.9L1113.6 1133.5L1117.0 1136.2L1120.7 1137.0L1121.6 1144.4L1126.7 1144.4L1126.7 1147.4L1129.2 1150.1L1127.3 1154.9L1127.3 1156.1M1095.1 1148.0L1098.0 1152.5L1098.8 1160.0L1099.7 1164.0M1127.3 1156.1L1124.7 1153.4L1117.3 1154.3L1114.7 1162.2L1109.9 1164.0L1105.1 1161.0L1101.7 1164.0M1127.3 1156.1L1128.1 1161.9L1134.4 1162.5L1135.2 1167.8M1102.5 1094.0L1106.5 1095.1L1110.8 1092.0L1112.5 1091.1L1110.2 1086.6L1113.9 1086.9L1114.5 1086.0L1119.3 1084.6L1120.1 1082.6M1120.1 1082.6L1118.2 1080.6L1119.0 1078.3L1121.3 1077.4L1122.1 1073.1M1120.1 1082.6L1122.1 1083.2L1122.4 1088.9L1123.3 1092.3L1125.3 1093.7L1130.7 1092.0L1132.1 1092.0M1132.1 1092.0L1129.8 1087.7L1127.8 1086.0L1130.1 1082.6L1130.1 1080.3M1132.1 1092.0L1133.8 1090.3L1137.5 1090.9L1142.3 1091.1L1145.7 1085.7M1137.5 1090.9L1138.6 1087.2L1137.8 1083.2L1139.2 1080.9M1286.5 990.7L1287.7 992.7L1289.4 999.6L1284.3 1001.9L1282.3 1004.9L1278.0 1007.9L1274.3 1009.2L1268.1 1012.1L1268.1 1016.6M1268.1 1016.6L1268.1 1020.8L1258.7 1020.8L1258.7 1028.6L1255.8 1030.1L1255.8 1035.4L1244.4 1035.4M1268.1 1016.6L1279.1 1023.9L1296.2 1036.0L1296.2 1037.2L1302.2 1042.3L1304.7 1042.0L1309.3 1040.8L1326.9 1028.6L1321.2 1025.5L1319.8 1019.8L1321.0 1014.4L1319.8 1007.2L1318.4 1001.2L1314.1 995.1L1316.4 990.3L1317.3 984.3M1319.8 1007.2L1322.1 1002.2L1325.5 999.6L1325.5 997.2M1363.9 1002.6L1363.9 1039.3L1361.1 1039.3L1361.1 1040.8L1338.3 1028.9L1335.5 1030.1L1333.2 1031.4L1326.9 1028.6M1363.9 1033.2L1397.8 1033.2M1279.1 1023.9L1274.3 1023.9L1277.2 1052.8L1266.3 1052.8L1262.1 1053.4L1259.2 1054.8L1258.1 1054.8L1254.4 1050.7L1251.6 1049.5L1245.9 1051.3M1258.1 1054.8L1260.4 1061.9L1253.8 1061.3L1245.3 1061.9M1253.8 1061.3L1253.8 1063.9L1250.1 1066.2M1260.4 1061.9L1264.4 1062.4L1268.6 1064.5L1269.2 1067.4L1270.0 1068.2L1275.2 1066.8L1277.2 1067.7L1278.0 1063.6L1280.3 1061.0L1281.7 1058.9L1285.7 1056.3L1290.8 1053.9L1293.4 1054.2L1296.5 1053.4L1302.8 1053.1L1304.7 1048.9L1304.7 1042.0M1255.0 1071.7L1257.2 1069.1L1260.9 1068.8L1262.6 1071.4L1263.5 1073.1L1266.1 1076.3L1268.6 1075.7L1270.9 1073.4L1270.0 1068.2M1263.5 1073.1L1260.1 1077.7M1268.6 1075.7L1268.9 1079.2L1271.5 1080.9L1271.5 1084.9M1277.2 1067.7L1280.0 1069.7L1284.8 1069.7L1285.4 1074.6L1283.7 1078.9L1284.8 1082.9M1284.8 1069.7L1284.8 1065.9L1292.8 1065.6L1294.2 1070.3L1294.5 1076.0L1296.2 1080.0M1292.8 1065.6L1295.4 1065.9L1297.4 1071.7L1297.4 1079.7M1300.5 1079.2L1300.5 1071.7L1303.0 1067.7L1303.0 1063.9L1299.6 1062.4L1295.4 1065.9M1293.4 1054.2L1295.4 1058.6L1298.8 1061.0L1299.6 1062.4M1303.0 1063.9L1304.5 1058.6L1311.9 1058.9L1318.4 1060.7L1323.2 1058.9L1331.5 1058.1L1331.2 1055.7L1336.9 1048.6L1337.2 1039.3L1335.5 1030.1M1332.9 1059.8L1334.3 1064.5L1330.6 1068.5L1327.5 1073.4L1325.5 1078.6L1321.5 1077.7L1317.3 1083.7M1332.9 1059.8L1335.5 1062.7L1335.5 1068.8L1332.6 1068.8L1336.9 1076.0L1345.7 1074.6L1346.8 1071.7L1350.8 1071.4L1357.9 1066.2L1356.8 1061.0L1355.4 1057.8L1358.2 1052.2L1361.1 1052.2L1361.1 1040.8M1336.9 1076.0L1333.8 1080.3L1334.6 1084.3L1337.7 1088.6L1338.9 1091.1L1330.6 1091.1L1324.9 1090.9L1320.7 1090.9M1324.9 1090.9L1324.9 1094.6L1320.1 1094.6M1330.6 1091.1L1334.0 1093.4L1332.3 1097.4L1334.0 1099.1L1333.8 1102.8L1328.4 1104.2L1325.8 1105.4L1326.6 1107.9L1324.4 1108.5M1338.9 1091.1L1339.7 1087.4L1345.7 1087.4L1345.7 1085.2L1351.1 1084.9L1356.5 1085.7L1362.2 1082.9L1370.7 1082.9M1357.9 1066.2L1360.2 1072.6L1361.6 1073.7L1364.8 1076.6L1370.7 1082.9L1375.3 1084.9L1380.4 1087.4M1345.7 1087.4L1343.4 1096.5L1338.9 1103.1L1338.0 1108.8L1333.8 1111.4L1330.1 1110.5L1327.5 1114.2M1327.8 1114.5L1330.3 1114.2L1340.0 1114.2L1341.2 1118.2L1348.0 1120.2L1354.8 1118.2L1354.8 1124.5L1356.2 1129.5L1360.8 1128.6L1361.1 1134.4L1355.4 1134.7L1355.4 1144.1L1359.4 1148.3M1360.8 1128.6L1365.0 1129.5L1369.3 1131.5L1373.6 1133.2L1377.6 1135.9L1377.6 1132.4L1373.6 1131.2L1374.2 1125.1L1375.0 1121.7L1380.4 1120.8L1386.4 1124.3M1326.4 1147.4L1332.3 1147.7L1345.1 1147.7L1353.7 1149.5L1359.4 1148.3L1364.8 1148.9M1352.5 1150.4L1352.5 1161.6L1349.7 1161.6L1349.7 1167.8M1364.8 1148.9L1369.6 1149.5L1375.0 1143.5L1379.3 1142.3L1378.7 1140.0L1387.2 1137.6L1386.4 1134.7L1388.1 1127.4L1386.4 1124.3M1364.8 1148.9L1366.8 1152.5L1371.6 1157.0L1376.4 1162.2M1379.3 1142.3L1386.4 1145.6L1386.1 1152.5L1385.2 1159.4L1381.8 1162.8M1392.1 1130.6L1400.9 1129.8L1407.7 1127.4M1392.1 1130.6L1391.2 1136.2L1394.9 1140.3L1393.2 1146.8L1390.6 1144.4L1390.4 1139.1L1387.2 1137.6M1379.6 1100.2L1389.5 1100.2L1400.0 1105.9L1404.3 1110.8M1379.6 1100.2L1380.4 1104.2L1379.3 1109.6L1376.4 1110.2M1375.3 1101.7L1375.9 1105.4L1376.4 1110.2M1377.0 1101.4L1379.6 1100.2M1377.0 1101.4L1377.8 1096.0L1381.5 1091.1L1380.4 1087.4L1389.5 1085.4L1392.4 1092.6L1389.5 1096.8L1389.5 1100.2M1389.5 1085.4L1394.9 1084.3L1400.9 1087.2L1405.2 1087.7L1409.4 1086.3L1412.0 1086.3L1409.4 1089.4L1409.4 1099.7L1411.1 1102.2M1412.0 1086.3L1415.1 1084.0L1420.8 1083.2L1429.3 1074.6L1426.5 1074.6L1418.0 1071.7L1415.1 1065.9L1414.5 1065.9L1411.7 1065.9L1413.4 1061.6L1408.9 1056.9L1403.7 1055.4L1400.6 1054.5L1396.6 1056.3L1398.0 1048.3L1402.6 1045.3M1414.5 1065.9L1416.0 1064.5M1396.6 1056.3L1395.5 1061.0L1392.4 1063.6L1390.4 1067.1L1389.8 1072.8L1386.7 1074.6L1389.5 1077.4L1393.2 1082.0L1394.9 1084.3M1360.2 1072.6L1362.8 1069.4L1368.2 1070.3L1372.4 1070.8L1375.3 1068.8L1381.0 1069.4L1385.0 1063.9L1387.2 1062.4L1387.0 1066.8L1389.8 1070.3M1267.5 965.9L1269.5 965.5L1274.3 965.9L1275.2 967.1L1273.2 969.3L1272.9 974.2L1271.5 974.5L1272.9 979.7L1271.8 983.3M1287.7 960.1L1294.8 962.4L1301.9 964.0M1314.1 958.5L1312.7 955.0L1312.7 950.1L1318.4 949.7L1322.7 946.4L1331.8 947.6L1338.6 946.4L1341.4 941.4L1346.3 942.2L1351.1 939.2L1355.7 939.7M1309.9 948.9L1312.7 943.5L1314.4 943.1L1320.1 943.5L1322.7 946.4M1312.7 950.1L1309.9 948.9M1314.4 943.1L1316.1 937.1L1311.0 934.9L1304.7 932.7L1299.9 927.8M1302.5 926.4L1307.0 926.4L1309.9 929.1L1310.2 924.6L1312.7 921.8L1313.3 917.5M1309.9 929.1L1311.0 934.9M1317.3 909.8L1321.0 910.3M1333.2 914.7L1334.3 920.9L1335.5 928.2L1334.9 928.7L1327.2 931.4L1332.1 937.9L1329.8 943.5L1321.8 944.3L1320.1 943.5M1332.1 937.9L1335.5 937.1L1341.2 938.8L1341.4 941.4M1334.9 928.7L1339.7 931.4L1346.3 934.9L1356.8 936.6M1341.2 938.8L1346.3 934.9M1356.8 936.6L1361.1 930.5L1359.9 925.9L1359.9 920.9L1360.8 914.7L1359.6 913.2L1357.7 912.2L1349.1 912.2M1357.7 912.2L1357.4 909.3L1353.1 907.8M1359.6 914.2L1366.2 913.2L1368.5 905.8L1373.0 903.2L1370.7 896.5L1370.7 889.5L1372.4 885.6M1352.5 903.8L1362.5 902.7L1368.5 905.8M1361.9 894.4L1370.7 896.5M1373.0 903.2L1380.7 906.3L1381.0 914.2L1385.8 916.6L1383.3 923.2M1359.9 925.9L1369.6 925.9L1379.6 926.9L1383.3 923.2L1390.6 927.3L1394.1 930.9L1400.9 933.1L1407.1 934.4L1406.0 941.8L1401.5 945.2M1355.7 939.7L1356.8 936.6M1355.7 939.7L1362.8 941.8L1368.5 940.1L1373.0 940.5L1375.9 941.8L1378.1 948.1L1373.0 951.7L1377.0 952.5M1368.5 940.1L1372.7 947.2L1373.0 951.7M1355.7 939.7L1352.5 948.9L1350.5 949.3L1354.0 954.6L1357.4 955.8L1357.4 957.0L1363.9 958.9L1369.6 957.4L1374.2 958.9M1350.5 949.3L1346.6 950.1L1339.2 947.6M1337.7 953.0L1346.8 954.2L1348.0 957.0L1347.4 959.7L1345.4 963.2M1331.8 951.7L1336.3 951.7L1339.2 947.6M1346.8 954.2L1346.6 950.1M1357.4 957.0L1356.5 964.4L1357.9 968.2L1367.6 966.7L1372.4 965.5M1367.6 966.7L1366.8 970.5M1349.7 974.2L1352.5 970.1L1357.9 968.2M1348.0 965.9L1351.1 965.5L1352.5 970.1M1351.1 965.5L1356.5 964.4M1347.4 959.7L1350.8 962.4L1351.1 965.5M1325.5 888.4L1328.4 879.9L1327.5 874.0L1327.5 864.9L1331.2 855.2M1371.9 879.9L1378.1 871.0L1382.4 865.5L1378.1 855.2M1395.2 987.5L1400.9 984.7L1413.1 983.6L1420.2 983.3L1418.0 975.3L1420.2 974.2M1410.8 967.4L1416.5 968.9L1417.1 973.1L1420.2 974.2L1425.1 977.1L1429.3 974.2L1431.9 978.9M1406.6 960.1L1416.5 962.8L1425.1 966.3L1431.0 966.3M1425.1 966.3L1425.1 968.6L1420.8 968.6L1416.5 968.9M1413.1 983.6L1409.4 993.1L1403.2 996.5L1397.5 1000.2L1394.3 998.9M1403.2 996.5L1404.3 1000.6L1398.0 1002.9L1400.9 1006.2L1399.5 1007.9L1395.5 1010.5L1392.4 1009.8M1404.3 1000.6L1407.7 1001.6L1412.3 1004.2L1419.9 1010.5L1425.1 1010.8L1428.5 1007.5L1429.3 1007.9M1425.1 1010.8L1427.9 1012.8L1430.5 1012.8M1420.2 983.3L1423.6 988.2L1421.9 994.5L1424.2 997.2L1428.8 1001.9L1428.5 1004.6L1430.8 1007.9M1392.1 1009.5L1393.5 1003.9L1394.1 998.9L1392.6 997.5M1394.9 992.4L1396.9 993.8L1394.3 996.8M1390.4 1003.6L1392.1 1009.5M1414.5 1050.1L1415.7 1047.1L1419.4 1047.1L1426.5 1048.3L1432.2 1043.5L1440.7 1042.3L1449.2 1039.3L1451.0 1033.2L1449.8 1031.1L1442.4 1030.5L1439.6 1026.1M1449.8 1031.1L1451.5 1027.0L1452.7 1024.5L1453.2 1024.2M1440.7 1042.3L1443.8 1049.5M1446.1 982.9L1452.1 980.0L1459.2 981.8L1466.9 985.4L1465.2 993.4L1466.0 1002.9L1468.6 1003.2L1466.0 1008.5L1471.4 1013.4L1472.9 1016.9L1471.4 1018.9L1468.0 1023.3M1466.0 1008.5L1470.6 1009.8L1481.4 1008.2L1482.5 1003.9L1489.9 1001.6L1490.5 997.5L1492.8 996.5L1495.0 994.1L1496.5 986.5L1501.9 984.3L1505.8 983.3M1466.9 985.4L1466.9 988.9L1472.0 989.6L1476.3 986.5L1482.0 982.5L1486.2 984.0L1490.5 981.8L1492.5 980.7L1496.5 985.0L1497.0 979.3L1505.8 983.3M1482.0 982.5L1476.0 977.1L1469.7 971.2L1466.3 968.6L1463.5 964.8L1459.5 962.4L1456.1 964.8L1452.1 968.2L1450.4 968.2L1448.4 965.5L1441.8 965.5M1452.1 968.2L1452.1 953.8L1459.5 951.3L1466.6 956.2L1477.4 958.9L1480.8 961.7L1480.5 964.0L1482.0 965.5L1485.9 968.6L1487.9 970.5L1493.3 965.5L1494.8 964.4L1501.9 961.7L1505.3 960.9L1511.8 962.1L1520.9 964.8L1511.5 969.3L1502.4 974.9L1505.8 978.6L1505.8 983.3M1502.4 974.9L1493.3 974.5L1489.9 972.3L1487.4 974.9L1484.5 976.0L1486.5 979.3L1486.2 984.0M1494.8 964.4L1492.8 968.6L1500.4 970.1L1496.7 972.3L1493.3 971.9L1489.9 972.3M1432.5 948.1L1429.3 942.2L1426.5 940.1L1425.1 939.7L1426.5 936.2L1426.5 931.8L1431.3 933.1L1431.6 930.0L1437.3 925.0L1442.1 925.9L1447.8 928.2L1451.2 930.0L1454.9 927.8L1459.5 928.2L1463.2 929.1L1467.4 929.1L1464.0 923.6L1466.3 919.0L1466.9 914.7L1472.0 913.2L1477.7 912.7L1486.8 909.3L1489.1 907.8L1494.5 907.8L1495.3 913.7L1501.9 914.2L1503.3 916.1L1511.3 912.2L1514.4 917.5L1520.4 929.1L1528.9 928.2L1535.4 934.4L1541.1 936.2M1541.1 936.2L1536.6 939.7L1536.0 945.2L1528.9 944.7L1526.9 951.7L1521.2 953.8L1520.9 964.8M1541.1 936.2L1542.5 936.2L1547.9 933.1L1555.9 929.1L1561.0 930.0L1569.6 933.6L1572.4 930.5L1572.4 923.6L1574.4 924.6L1583.5 926.9L1583.8 930.0L1595.7 931.4M1542.5 936.2L1551.4 946.0L1551.6 953.0L1564.2 956.6L1567.0 962.8L1577.2 963.2L1590.0 965.9L1595.7 965.5M1505.8 983.3L1509.0 988.2L1514.1 989.3L1517.5 993.4L1516.7 999.6L1518.9 1004.6L1523.2 1007.2L1526.0 1006.9L1531.7 1010.5L1537.4 1014.4L1543.4 1014.7L1545.7 1016.6L1548.2 1013.7L1553.4 1015.0L1554.8 1017.9L1557.9 1012.4L1565.9 1009.8L1569.6 1013.7M1520.4 1011.8L1523.8 1013.1L1529.7 1016.6L1536.9 1018.9L1543.4 1019.5L1543.4 1014.7M1545.7 1016.6L1548.2 1018.5L1554.8 1017.9M1523.2 1007.2L1520.4 1011.8M1486.8 1028.0L1491.9 1026.4L1494.8 1025.8L1491.9 1021.7L1492.5 1018.9L1490.5 1017.6L1493.0 1014.4L1497.3 1014.7L1501.6 1008.2L1504.7 1004.6L1505.0 999.6L1503.3 992.7L1509.0 988.2M1543.4 1019.5L1545.4 1023.3L1543.4 1025.5L1545.1 1029.5L1546.0 1033.5M1548.2 1020.8L1548.8 1023.0L1555.6 1023.9L1552.2 1027.0L1552.5 1029.8L1555.3 1028.0L1556.2 1035.4L1555.3 1037.2M1543.4 1019.5L1548.2 1020.8M1569.6 1013.7L1563.6 1019.2L1561.9 1023.9L1558.5 1027.4L1557.9 1032.6L1556.2 1035.4M1569.6 1013.7L1573.5 1016.0L1573.5 1021.4L1570.1 1024.9L1571.0 1027.4L1575.0 1032.9L1577.8 1034.8L1580.7 1035.7L1577.5 1038.4L1573.0 1040.2L1569.8 1043.8L1573.5 1050.4L1572.1 1053.9L1575.0 1063.0L1573.8 1067.9M1577.5 1038.4L1578.7 1040.8L1580.9 1040.8L1580.1 1045.9L1583.2 1044.7L1588.6 1044.4L1590.6 1047.1L1590.9 1050.1L1593.2 1052.5L1592.9 1056.0L1585.8 1056.6L1584.4 1058.3L1585.5 1063.9M1577.5 1079.2L1580.4 1081.2L1583.2 1079.7M1580.7 1035.7L1582.9 1032.0L1585.8 1031.7L1591.5 1029.5L1595.7 1030.5M1582.9 1032.0L1585.8 1036.3L1590.0 1038.1L1588.3 1041.4L1592.0 1043.2L1595.7 1048.3" stroke="#85857a" stroke-width=".65" stroke-opacity=".9"/><path d="M991.3 937.1L1022.0 937.1L1022.6 935.3L1023.7 938.4L1028.3 938.8L1032.5 940.9L1038.2 941.4L1041.4 940.1L1051.3 946.0L1052.4 947.6L1055.3 949.7L1058.1 952.5L1059.3 959.3L1058.1 963.2L1056.4 965.1L1058.1 966.7L1062.4 964.8L1068.1 962.4L1067.8 960.1L1069.5 959.3L1074.3 959.3L1075.8 957.0L1079.5 953.8L1089.4 953.8L1091.4 952.1L1093.7 947.6L1096.0 943.9L1098.5 944.3L1099.9 945.6L1099.9 950.9L1101.1 953.0L1102.2 954.6" stroke="#77859a" stroke-width=".65"/></g><path d="M996.9 1097.4 L1590 1097.4" stroke="#968cbe" stroke-width="1.6" stroke-dasharray="5.8 2.2" stroke-opacity=".9" fill="none"/><g font-size="8.7" font-weight="bold" fill="#2c2c2c" stroke="#fff" stroke-width="1.8" stroke-opacity=".8" stroke-linejoin="round" paint-order="stroke"><text x="1316.8" y="881.5" text-anchor="middle" textLength="30.2" lengthAdjust="spacingAndGlyphs">Norway</text><text x="1346.2" y="923.2" text-anchor="middle" textLength="27.3" lengthAdjust="spacingAndGlyphs">Poland</text><text x="1322.2" y="939.3" text-anchor="middle" textLength="35.6" lengthAdjust="spacingAndGlyphs">Germany</text><text x="1385.2" y="938.2" text-anchor="middle" textLength="30.5" lengthAdjust="spacingAndGlyphs">Ukraine</text><text x="1299.2" y="953.4" text-anchor="middle" textLength="28.4" lengthAdjust="spacingAndGlyphs">France</text><text x="1327.6" y="964.3" text-anchor="middle" textLength="16.4" lengthAdjust="spacingAndGlyphs">Italy</text><text x="1283.3" y="970.1" text-anchor="middle" textLength="21.9" lengthAdjust="spacingAndGlyphs">Spain</text><text x="1394" y="981.5" text-anchor="middle" textLength="26.9" lengthAdjust="spacingAndGlyphs">Turkey</text><text x="1484.6" y="944.3" text-anchor="middle" textLength="46.1" lengthAdjust="spacingAndGlyphs">Kazakhstan</text><text x="1486.3" y="997.6" text-anchor="middle" textLength="48" lengthAdjust="spacingAndGlyphs">Afghanistan</text><text x="1415.8" y="1001.5" text-anchor="middle" textLength="14.7" lengthAdjust="spacingAndGlyphs">Iraq</text><text x="1447.7" y="1006.5" text-anchor="middle" textLength="14.9" lengthAdjust="spacingAndGlyphs">Iran</text><text x="1488.8" y="1013.5" text-anchor="middle" textLength="33.6" lengthAdjust="spacingAndGlyphs">Pakistan</text><text x="1104.7" y="1078.4" text-anchor="middle" textLength="40.6" lengthAdjust="spacingAndGlyphs">Venezuela</text><text x="1076.1" y="1090.1" text-anchor="middle" textLength="37.8" lengthAdjust="spacingAndGlyphs">Colombia</text><text x="1134.5" y="1125.3" text-anchor="middle" textLength="22.1" lengthAdjust="spacingAndGlyphs">Brazil</text><text x="1076.3" y="1133.1" text-anchor="middle" textLength="18" lengthAdjust="spacingAndGlyphs">Peru</text><text x="1109.7" y="1149.1" text-anchor="middle" textLength="26.2" lengthAdjust="spacingAndGlyphs">Bolivia</text><text x="1298.3" y="1018.7" text-anchor="middle" textLength="28.2" lengthAdjust="spacingAndGlyphs">Algeria</text><text x="1342.9" y="1021.4" text-anchor="middle" textLength="20.8" lengthAdjust="spacingAndGlyphs">Libya</text><text x="1378.4" y="1017.4" text-anchor="middle" textLength="21.5" lengthAdjust="spacingAndGlyphs">Egypt</text><text x="1421.25" y="1032.0" text-anchor="middle" textLength="50" lengthAdjust="spacingAndGlyphs">Saudi Arabia</text><text x="1519.7" y="1034.3" text-anchor="middle" textLength="18.7" lengthAdjust="spacingAndGlyphs">India</text><text x="1321.8" y="1050.3" text-anchor="middle" textLength="20.8" lengthAdjust="spacingAndGlyphs">Niger</text><text x="1287.5" y="1050.3" text-anchor="middle" textLength="15.5" lengthAdjust="spacingAndGlyphs">Mali</text><text x="1379.7" y="1052.1" text-anchor="middle" textLength="25.3" lengthAdjust="spacingAndGlyphs">Sudan</text><text x="1348.2" y="1061.2" text-anchor="middle" textLength="20.2" lengthAdjust="spacingAndGlyphs">Chad</text><text x="1316.4" y="1074.5" text-anchor="middle" textLength="27.8" lengthAdjust="spacingAndGlyphs">Nigeria</text><text x="1406.4" y="1076.0" text-anchor="middle" textLength="31.8" lengthAdjust="spacingAndGlyphs">Ethiopia</text><text x="1400.4" y="1100.3" text-anchor="middle" textLength="23.9" lengthAdjust="spacingAndGlyphs">Kenya</text><text x="1358.2" y="1106.2" text-anchor="middle" textLength="39.6" lengthAdjust="spacingAndGlyphs">DR Congo</text><text x="1398.4" y="1119.3" text-anchor="middle" textLength="35.6" lengthAdjust="spacingAndGlyphs">Tanzania</text><text x="1340.2" y="1137.3" text-anchor="middle" textLength="27.8" lengthAdjust="spacingAndGlyphs">Angola</text><text x="1337.8" y="1157.3" text-anchor="middle" textLength="32.4" lengthAdjust="spacingAndGlyphs">Namibia</text><text x="1429.3" y="1162.4" text-anchor="middle" textLength="48" lengthAdjust="spacingAndGlyphs">Madagascar</text><text x="1560.5" y="872.9" text-anchor="middle" textLength="26.1" lengthAdjust="spacingAndGlyphs">Russia</text><text x="1012.2" y="915.4" text-anchor="end" textLength="32" lengthAdjust="spacingAndGlyphs">Canada</text><text x="1031.3" y="977.9" text-anchor="end" textLength="56" lengthAdjust="spacingAndGlyphs">United States</text><text x="1015.8" y="1031.5" text-anchor="end" textLength="27" lengthAdjust="spacingAndGlyphs">Mexico</text><text x="1264.5" y="912.0" text-anchor="start" textLength="36" lengthAdjust="spacingAndGlyphs">Kingdom</text><text x="1567.3" y="950.6" text-anchor="start" textLength="37" lengthAdjust="spacingAndGlyphs">Mongolia</text><text x="1577.2" y="986.2" text-anchor="start" textLength="23" lengthAdjust="spacingAndGlyphs">China</text><text x="1563.4" y="1043.2" text-anchor="start" textLength="35" lengthAdjust="spacingAndGlyphs">Thailand</text></g><g font-size="11.8" font-style="italic" fill="#5d8dd2" text-anchor="middle" letter-spacing="2.05"><text x="1178.6" y="983.2">North</text><text x="1178.1" y="997.2">Atlantic</text><text x="1178.6" y="1010.4">Ocean</text></g><g fill="#333"><circle cx="1292.3" cy="896.5" r="20.7"/><path d="M1284.2 915.5 L1292.3 925.8 L1300.4 915.5Z"/></g><text x="1292.3" y="900.3" font-size="10.2" font-weight="bold" fill="#fff" text-anchor="middle">878</text><g><rect x="1005.2" y="873" width="93" height="31" rx="2" fill="#000" fill-opacity=".12"/><rect x="1004.7" y="872.2" width="93.4" height="30.7" rx="2" fill="#fff"/><rect x="1041.9" y="872.2" width=".8" height="30.7" fill="#e9e9e9"/><text x="1013.2" y="891.7" font-size="11" font-weight="bold" fill="#111" textLength="21.4" lengthAdjust="spacingAndGlyphs">Map</text><text x="1050.8" y="891.9" font-size="11" fill="#565656" textLength="39.6" lengthAdjust="spacingAndGlyphs">Satellite</text></g><rect x="1551.8" y="873" width="24.8" height="24.6" rx="2" fill="#000" fill-opacity=".12"/><rect x="1551.3" y="872.2" width="24.8" height="24.5" rx="2" fill="#fff"/><path d="M1557.2 882.3 L1557.2 878.1 L1561.4 878.1 M1566 878.1 L1570.2 878.1 L1570.2 882.3 M1570.2 886.9 L1570.2 891 L1566 891 M1561.4 891 L1557.2 891 L1557.2 886.9" stroke="#666" stroke-width="1.7" fill="none"/><rect x="1552.5" y="1045.9" width="28.2" height="27.6" rx="2" fill="#000" fill-opacity=".12"/><rect x="1552" y="1045.1" width="28.2" height="27.5" rx="2" fill="#fff"/><g fill="#f5b12b"><circle cx="1566" cy="1051.6" r="2.9"/><path d="M1562.3 1055.3 Q1566 1054.2 1569.7 1055.3 L1570.6 1061.4 L1569.2 1061.8 L1568.5 1067.3 L1566.4 1067.3 L1566 1063 L1565.6 1067.3 L1563.5 1067.3 L1562.8 1061.8 L1561.4 1061.4Z"/></g><path d="M1564.2 1056 L1566 1058.2 L1567.8 1056" fill="#e08f12"/><rect x="1552.5" y="1083.9" width="28.2" height="54.8" rx="2" fill="#000" fill-opacity=".12"/><rect x="1552" y="1083.1" width="28.2" height="54.7" rx="2" fill="#fff"/><rect x="1556.5" y="1110" width="19.2" height=".8" fill="#e6e6e6"/><path d="M1561 1096.5 L1571.8 1096.5 M1566.4 1091.1 L1566.4 1101.9 M1561 1124.2 L1571.8 1124.2" stroke="#666" stroke-width="2.1" fill="none"/><rect x="1432.2" y="1148" width="157.8" height="14" fill="#fff" fill-opacity=".7"/><rect x="1518.2" y="1150" width=".7" height="10.5" fill="#bbb"/><g font-size="10" fill="#393939"><text x="1437.7" y="1160.7" textLength="73.9" lengthAdjust="spacingAndGlyphs">Map data ©2018</text><text x="1525.2" y="1160.7" textLength="58.6" lengthAdjust="spacingAndGlyphs">Terms of Use</text></g><g font-size="19.5" font-weight="bold" stroke="#fff" stroke-width="2" stroke-linejoin="round" paint-order="stroke" stroke-opacity=".95"><text x="1001.4" y="1154.2" textLength="61.8" lengthAdjust="spacingAndGlyphs"><tspan fill="#4285f4">G</tspan><tspan fill="#ea4335">o</tspan><tspan fill="#fbbc05">o</tspan><tspan fill="#4285f4">g</tspan><tspan fill="#34a853">l</tspan><tspan fill="#ea4335">e</tspan></text></g>
</svg>
<!--MAPEND--></div></div>
</body>
</html>
